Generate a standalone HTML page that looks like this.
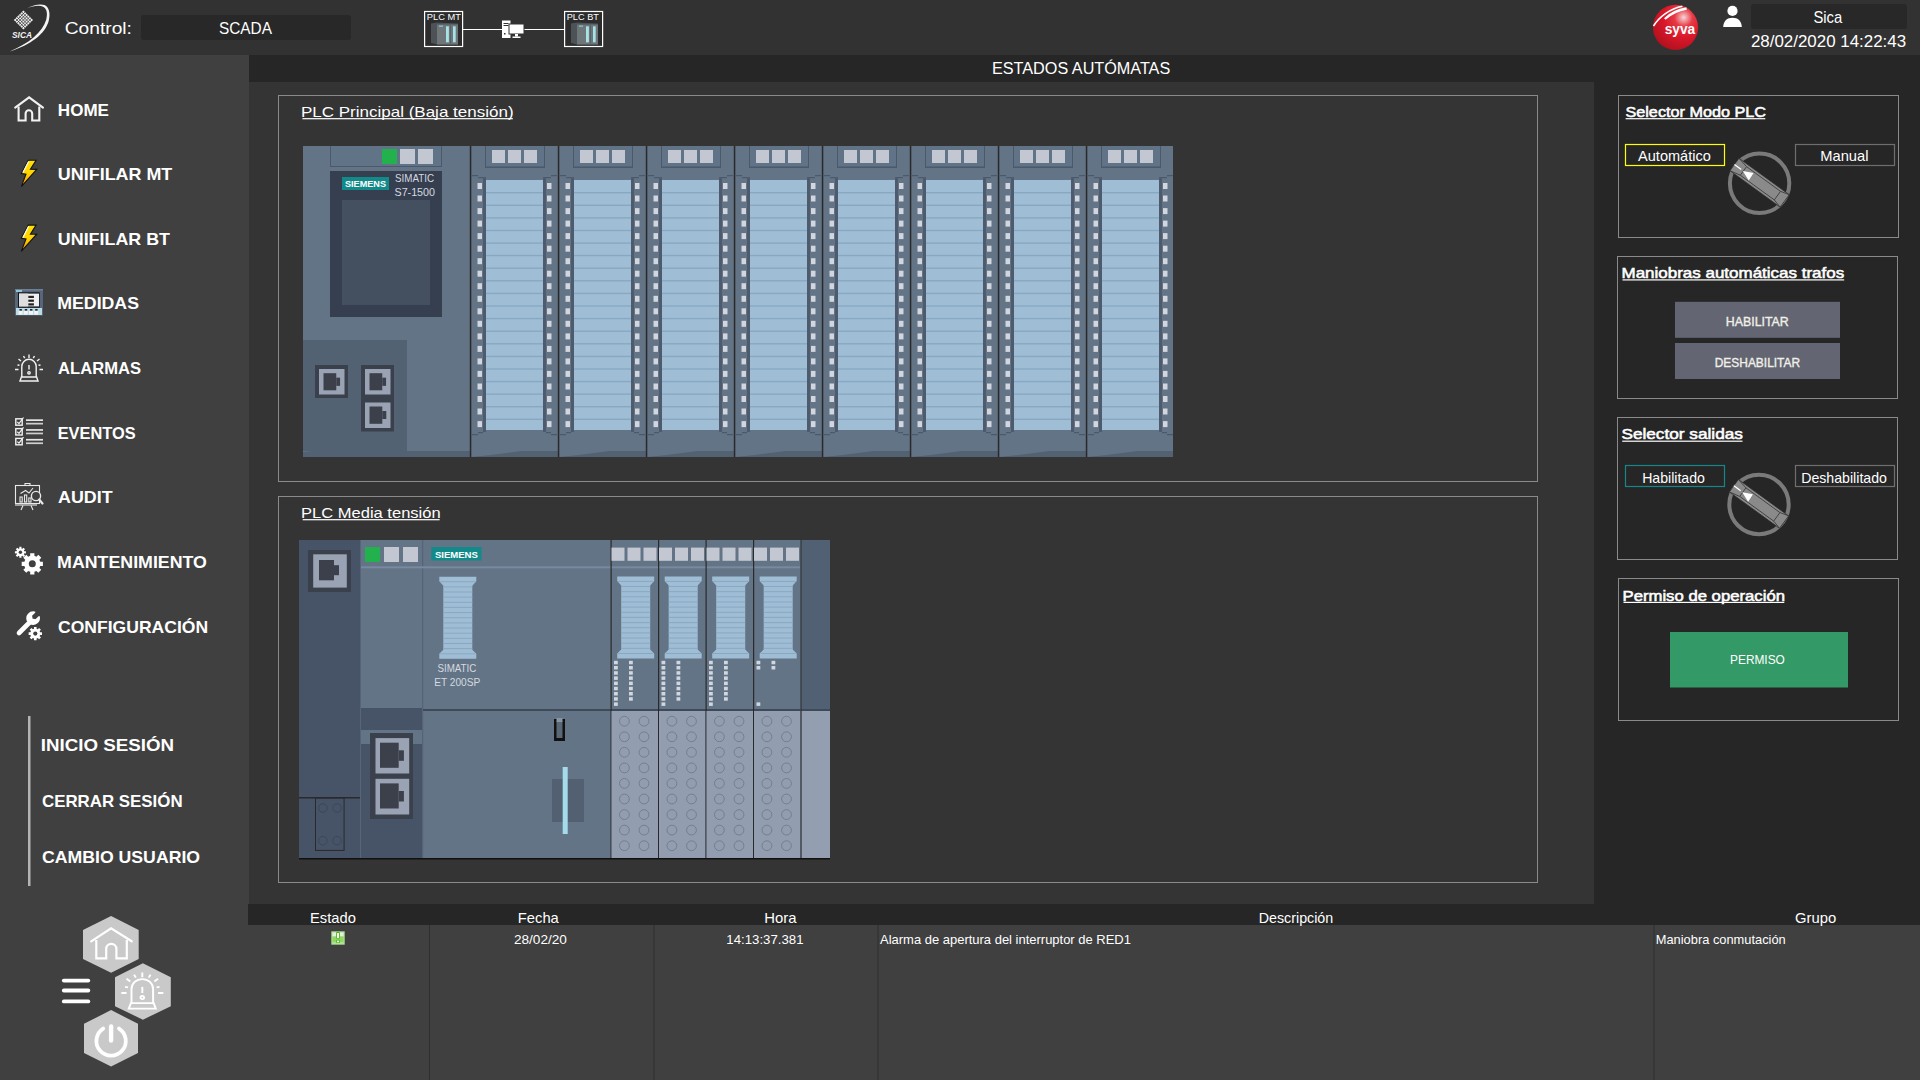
<!DOCTYPE html>
<html><head><meta charset="utf-8"><title>SCADA</title>
<style>
*{margin:0;padding:0}
html,body{width:1920px;height:1080px;overflow:hidden;background:#353535}
svg{display:block}
text{font-family:"Liberation Sans", sans-serif}
</style></head><body>
<svg width="1920" height="1080" viewBox="0 0 1920 1080" font-family="Liberation Sans, sans-serif">
<rect x="0" y="0" width="1920" height="55" fill="#323232" />
<rect x="0" y="55" width="249" height="1025" fill="#404040" />
<rect x="249" y="55" width="1671" height="27" fill="#262626" />
<rect x="249" y="82" width="1345" height="822" fill="#343434" />
<rect x="1594" y="82" width="326" height="822" fill="#262626" />
<rect x="248" y="904" width="1672" height="21" fill="#262626" />
<rect x="248" y="925" width="1672" height="155" fill="#404040" />
<rect x="429" y="925" width="1" height="155" fill="#2f2f2f" />
<rect x="653.5" y="925" width="1" height="155" fill="#2f2f2f" />
<rect x="877.5" y="925" width="1" height="155" fill="#2f2f2f" />
<rect x="1653.5" y="925" width="1" height="155" fill="#2f2f2f" />
<path d="M26.9 8.4 C 33 5, 40 3.4, 44.5 5 C 49.6 7.2, 50.3 14, 48.8 20.5 C 45.5 33.5, 31 45, 9.6 51.4 C 29 43.6, 42.6 32, 46.2 19.8 C 47.6 14.2, 47.2 9.2, 43.6 6.9 C 39.6 5.0, 33 5.8, 26.9 8.4 Z" fill="#f4f4f4"/>
<g transform="translate(23.4 20) rotate(45)">
<rect x="-6.8" y="-6.8" width="13.6" height="13.6" fill="#eee"/>
<g stroke="#323232" stroke-width="0.7"><line x1="-7" y1="-4.5" x2="7" y2="-4.5"/><line x1="-4.5" y1="-7" x2="-4.5" y2="7"/><line x1="-7" y1="-2.25" x2="7" y2="-2.25"/><line x1="-2.25" y1="-7" x2="-2.25" y2="7"/><line x1="-7" y1="0" x2="7" y2="0"/><line x1="0" y1="-7" x2="0" y2="7"/><line x1="-7" y1="2.25" x2="7" y2="2.25"/><line x1="2.25" y1="-7" x2="2.25" y2="7"/><line x1="-7" y1="4.5" x2="7" y2="4.5"/><line x1="4.5" y1="-7" x2="4.5" y2="7"/>
</g></g>
<text x="12" y="38" font-weight="bold" font-style="italic" font-size="9.6" fill="#f0f0f0" textLength="20" lengthAdjust="spacingAndGlyphs">SICA</text>
<rect x="141" y="15" width="210" height="25" rx="3" fill="#282828"/>
<rect x="424.6" y="11.5" width="38" height="35" fill="#2c2c2c" stroke="#fff" stroke-width="1.2"/>
<path d="M431 23.5 L437 22.5 L458 23.5 L458 44.5 L437 44.5 L431 43 Z" fill="#4c5256"/>
<rect x="437" y="24.5" width="21" height="20" fill="#6f767a"/>
<rect x="446" y="26.3" width="2.9" height="16" fill="#a6e2e6"/>
<rect x="453" y="26.3" width="2.7" height="16" fill="#a6e2e6"/>
<rect x="439" y="25.5" width="4" height="1.3" fill="#7fc6cc"/>
<rect x="450" y="24.5" width="1" height="20" fill="#5a6165"/>

<rect x="564.6" y="11.5" width="38" height="35" fill="#2c2c2c" stroke="#fff" stroke-width="1.2"/>
<path d="M571 23.5 L577 22.5 L598 23.5 L598 44.5 L577 44.5 L571 43 Z" fill="#4c5256"/>
<rect x="577" y="24.5" width="21" height="20" fill="#6f767a"/>
<rect x="586" y="26.3" width="2.9" height="16" fill="#a6e2e6"/>
<rect x="593" y="26.3" width="2.7" height="16" fill="#a6e2e6"/>
<rect x="579" y="25.5" width="4" height="1.3" fill="#7fc6cc"/>
<rect x="590" y="24.5" width="1" height="20" fill="#5a6165"/>

<line x1="463" y1="29.5" x2="502" y2="29.5" stroke="#fff" stroke-width="1"/>
<line x1="524" y1="29.5" x2="564" y2="29.5" stroke="#fff" stroke-width="1"/>
<rect x="502" y="20.5" width="8.5" height="17.5" fill="#fff"/>
<rect x="503.5" y="23" width="5" height="1" fill="#323232"/>
<rect x="503.5" y="25" width="5" height="1" fill="#323232"/>
<rect x="504" y="33" width="1.5" height="1.5" fill="#323232"/>
<rect x="509" y="24" width="15" height="10" fill="#fff" stroke="#323232" stroke-width="1"/>
<rect x="515" y="34" width="3" height="2.5" fill="#fff"/>
<rect x="512.5" y="36.5" width="8" height="1.5" fill="#fff"/>
<defs><radialGradient id="sg" cx="0.68" cy="0.28" r="0.8">
<stop offset="0" stop-color="#f9d5d8"/><stop offset="0.25" stop-color="#e63a45"/><stop offset="0.55" stop-color="#d9182a"/><stop offset="1" stop-color="#b0101e"/></radialGradient></defs>
<g transform="translate(1645 0)">
<circle cx="30.5" cy="27.4" r="22.6" fill="url(#sg)"/>
<path d="M8.5 26 C 14 17, 25 8.5, 37.4 6.2" stroke="#fff" stroke-width="1.6" fill="none"/>
<path d="M19.8 19 C 25 14, 33 10, 41.6 8.5" stroke="#fff" stroke-width="2.3" fill="none"/>
<text x="35" y="34.3" font-weight="bold" font-size="13.8" fill="#fff" text-anchor="middle" textLength="30.5" lengthAdjust="spacingAndGlyphs">syva</text>
</g>
<g transform="translate(1720 0)">
<circle cx="12.5" cy="10.9" r="5.1" fill="#fff"/>
<path d="M3.2 27 C 3.5 21, 7 17.8, 12.5 17.8 C 18 17.8, 21.5 21, 21.8 27 Z" fill="#fff"/>
</g>
<rect x="1751" y="4" width="156" height="25" rx="3" fill="#282828"/>
<defs><linearGradient id="boltg" x1="0" y1="0" x2="0" y2="1">
<stop offset="0" stop-color="#ffe000"/><stop offset="0.5" stop-color="#ffd400"/><stop offset="1" stop-color="#ff9000"/></linearGradient></defs>
<path d="M15.2 107.6 L29.1 97.4 L43 107.6" fill="none" stroke="#f2f2f2" stroke-width="2.1" stroke-linecap="round"/>
<path d="M18.6 106.5 L18.6 120.5 L25.6 120.5 L25.6 113.6 A3.3 3.3 0 0 1 32.2 113.6 L32.2 120.5 L39.3 120.5 L39.3 106.5" fill="none" stroke="#f2f2f2" stroke-width="2.1"/>
<g transform="translate(0 0)">
<path d="M28.3 160.2 L36.1 160.3 L30.4 169.3 L36.7 169.4 L21.3 186.6 L26 174.1 L21.3 173.5 Z" fill="url(#boltg)" stroke="#121212" stroke-width="1.1" stroke-linejoin="miter"/>
<path d="M28.6 161.4 L23 172.6" stroke="#ffffff" stroke-width="1.2"/>
</g>
<g transform="translate(0 64.8)">
<path d="M28.3 160.2 L36.1 160.3 L30.4 169.3 L36.7 169.4 L21.3 186.6 L26 174.1 L21.3 173.5 Z" fill="url(#boltg)" stroke="#121212" stroke-width="1.1" stroke-linejoin="miter"/>
<path d="M28.6 161.4 L23 172.6" stroke="#ffffff" stroke-width="1.2"/>
</g>
<rect x="15" y="289" width="28" height="26.6" fill="#56667c"/>
<rect x="15" y="289" width="28" height="1.5" fill="#6f8096"/>
<rect x="16" y="290" width="6" height="2" fill="#8fc6d0"/>
<rect x="18" y="292.3" width="21.7" height="15.4" fill="#111418"/>
<rect x="19" y="293.6" width="20" height="12.8" fill="#f0f0f0"/>
<rect x="19" y="293.6" width="9" height="12.8" fill="#dedede"/>
<g fill="#222"><rect x="28.3" y="295.8" width="5.6" height="2.2"/><rect x="28.3" y="299.6" width="5.6" height="2.2"/><rect x="28.3" y="303.3" width="5.6" height="2.2"/></g>
<rect x="16" y="308" width="26" height="7" fill="#bcdbe4"/>
<g fill="#f4f4f4"><rect x="18.5" y="311" width="4" height="3.6"/><rect x="23.8" y="311" width="4" height="3.6"/><rect x="29" y="311" width="4" height="3.6"/><rect x="34.2" y="311" width="4" height="3.6"/></g>
<g fill="#1c2430"><rect x="19.5" y="309" width="2.4" height="1.6"/><rect x="24.8" y="309" width="2.4" height="1.6"/><rect x="30" y="309" width="2.4" height="1.6"/><rect x="35.2" y="309" width="2.4" height="1.6"/></g>
<g transform="translate(29 364.5) scale(1.0)" fill="none" stroke="#f2f2f2" stroke-width="1.4">
<path d="M-7.2 12.5 L-7.2 2 A7.2 7.2 0 0 1 7.2 2 L7.2 12.5"/>
<path d="M-9 16.5 L-7.6 12.5 L7.6 12.5 L9 16.5 Z"/>
<path d="M0 0.5 L0 5"/><circle cx="0" cy="8.3" r="1.2"/>
<path d="M0 -10 L0 -6.5 M-5.5 -8.5 L-4.3 -6.3 M5.5 -8.5 L4.3 -6.3 M-10.5 -5.5 L-8 -3.5 M10.5 -5.5 L8 -3.5 M-11.5 0.5 L-9.5 0.8 M11.5 0.5 L9.5 0.8 M-14 5 L-10.5 5 M14 5 L10.5 5"/>
</g>
<rect x="15.8" y="418.8" width="6.4" height="6.4" fill="none" stroke="#f2f2f2" stroke-width="1.4"/><path d="M17.3 422 L19 423.6 L23.5 417.5" fill="none" stroke="#f2f2f2" stroke-width="1.2"/><rect x="26" y="419.3" width="17" height="1.7" fill="#e6e6e6"/><rect x="26" y="422.8" width="17" height="1.7" fill="#cfcfcf"/><rect x="15.8" y="428.6" width="6.4" height="6.4" fill="none" stroke="#f2f2f2" stroke-width="1.4"/><path d="M17.3 431.8 L19 433.40000000000003 L23.5 427.3" fill="none" stroke="#f2f2f2" stroke-width="1.2"/><rect x="26" y="429.1" width="17" height="1.7" fill="#e6e6e6"/><rect x="26" y="432.6" width="17" height="1.7" fill="#cfcfcf"/><rect x="15.8" y="438.40000000000003" width="6.4" height="6.4" fill="none" stroke="#f2f2f2" stroke-width="1.4"/><path d="M17.3 441.6 L19 443.20000000000005 L23.5 437.1" fill="none" stroke="#f2f2f2" stroke-width="1.2"/><rect x="26" y="438.90000000000003" width="17" height="1.7" fill="#e6e6e6"/><rect x="26" y="442.40000000000003" width="17" height="1.7" fill="#cfcfcf"/>
<g fill="none" stroke="#e8e8e8" stroke-width="1.1">
<rect x="15.5" y="485.5" width="24" height="18"/>
<path d="M25 485.5 L25 483.5 L30 483.5 L30 485.5"/>
<path d="M15 505 L37 505"/>
<path d="M23 505.5 L21 510 M31 505.5 L33 510"/>
<path d="M20.5 493.5 L25.5 490.5 L29 493 L33 488"/>
<rect x="20" y="497" width="2.2" height="5"/><rect x="24.5" y="495" width="2.2" height="7"/><rect x="28.8" y="498" width="2.2" height="4"/>
</g>
<circle cx="36" cy="496" r="4.6" fill="#404040" stroke="#e8e8e8" stroke-width="1.4"/>
<path d="M39.2 499.5 L42.5 503.5" stroke="#e8e8e8" stroke-width="2.2" stroke-linecap="round"/>
<path d="M24.27 551.27 L25.89 551.21 L25.89 553.39 L24.27 553.33 L23.86 554.31 L25.06 555.41 L23.51 556.96 L22.41 555.76 L21.43 556.17 L21.49 557.79 L19.31 557.79 L19.37 556.17 L18.39 555.76 L17.29 556.96 L15.74 555.41 L16.94 554.31 L16.53 553.33 L14.91 553.39 L14.91 551.21 L16.53 551.27 L16.94 550.29 L15.74 549.19 L17.29 547.64 L18.39 548.84 L19.37 548.43 L19.31 546.81 L21.49 546.81 L21.43 548.43 L22.41 548.84 L23.51 547.64 L25.06 549.19 L23.86 550.29 Z" fill="#fff"/><circle cx="20.4" cy="552.3" r="1.7" fill="#404040"/>
<path d="M40.23 561.70 L42.89 561.69 L42.89 565.91 L40.23 565.90 L39.39 567.92 L41.28 569.80 L38.30 572.78 L36.42 570.89 L34.40 571.73 L34.41 574.39 L30.19 574.39 L30.20 571.73 L28.18 570.89 L26.30 572.78 L23.32 569.80 L25.21 567.92 L24.37 565.90 L21.71 565.91 L21.71 561.69 L24.37 561.70 L25.21 559.68 L23.32 557.80 L26.30 554.82 L28.18 556.71 L30.20 555.87 L30.19 553.21 L34.41 553.21 L34.40 555.87 L36.42 556.71 L38.30 554.82 L41.28 557.80 L39.39 559.68 Z" fill="#fff"/><circle cx="32.3" cy="563.8" r="3.5" fill="#404040"/>
<path d="M19 633 L30 622" stroke="#fff" stroke-width="4.6" stroke-linecap="round"/>
<path d="M27.4 620.5 A6.3 6.3 0 0 1 34.6 612.2 L31.3 615.6 L32 619.3 L35.7 620.1 L39.1 616.8 A6.3 6.3 0 0 1 30.8 623.9 Z" fill="#fff" stroke="#fff" stroke-width="1.5" stroke-linejoin="round"/>
<path d="M40.13 632.32 L41.97 632.27 L41.97 634.93 L40.13 634.88 L39.62 636.11 L40.95 637.38 L39.08 639.25 L37.81 637.92 L36.58 638.43 L36.63 640.27 L33.97 640.27 L34.02 638.43 L32.79 637.92 L31.52 639.25 L29.65 637.38 L30.98 636.11 L30.47 634.88 L28.63 634.93 L28.63 632.27 L30.47 632.32 L30.98 631.09 L29.65 629.82 L31.52 627.95 L32.79 629.28 L34.02 628.77 L33.97 626.93 L36.63 626.93 L36.58 628.77 L37.81 629.28 L39.08 627.95 L40.95 629.82 L39.62 631.09 Z" fill="#fff"/><circle cx="35.3" cy="633.6" r="2.1" fill="#404040"/>
<rect x="28" y="716" width="2.5" height="170" fill="#b4b4b4"/>
<path d="M111.1 916.1 L138.7 929.9 L138.7 958.9 L111.1 972.7 L83 958.9 L83 929.9 Z" fill="#c9c9c9"/>
<path d="M142.9 963.2 L170.8 977.2 L170.8 1006.3 L142.9 1019.7 L115 1006.3 L115 977.2 Z" fill="#c9c9c9"/>
<path d="M111.1 1010.1 L138 1023.8 L138 1052.9 L111.1 1066.6 L84 1052.9 L84 1023.8 Z" fill="#c9c9c9"/>
<path d="M91.2 941.3 L111.1 928.3 L131.7 941.3" fill="none" stroke="#fff" stroke-width="2.2" stroke-linecap="round"/>
<path d="M96.3 940 L96.3 958.3 L106.2 958.3 L106.2 948.9 A5.1 5.1 0 0 1 116.4 948.9 L116.4 958.3 L126.8 958.3 L126.8 940" fill="none" stroke="#fff" stroke-width="2.2"/>
<g transform="translate(142.3 986.2) scale(1.5 1.36)"><g transform="translate(0 0) scale(1.0)" fill="none" stroke="#fff" stroke-width="1.3">
<path d="M-7.2 12.5 L-7.2 2 A7.2 7.2 0 0 1 7.2 2 L7.2 12.5"/>
<path d="M-9 16.5 L-7.6 12.5 L7.6 12.5 L9 16.5 Z"/>
<path d="M0 0.5 L0 5"/><circle cx="0" cy="8.3" r="1.2"/>
<path d="M0 -10 L0 -6.5 M-5.5 -8.5 L-4.3 -6.3 M5.5 -8.5 L4.3 -6.3 M-10.5 -5.5 L-8 -3.5 M10.5 -5.5 L8 -3.5 M-11.5 0.5 L-9.5 0.8 M11.5 0.5 L9.5 0.8 M-14 5 L-10.5 5 M14 5 L10.5 5"/>
</g></g>
<path d="M103.2 1028.6 A14.7 14.7 0 1 0 119 1028.6" fill="none" stroke="#fff" stroke-width="3.8" stroke-linecap="round"/>
<path d="M111.1 1026.5 L111.1 1040.5" stroke="#fff" stroke-width="4.4" stroke-linecap="round"/>
<path d="M63.8 980.6 L88.3 980.6" stroke="#fff" stroke-width="3.8" stroke-linecap="round"/>
<path d="M63.8 990.5 L88.3 990.5" stroke="#fff" stroke-width="3.8" stroke-linecap="round"/>
<path d="M63.8 1001.4 L88.3 1001.4" stroke="#fff" stroke-width="3.8" stroke-linecap="round"/>
<rect x="278.5" y="95.5" width="1259" height="386" fill="none" stroke="#8a8a8a" stroke-width="1"/>
<rect x="278.5" y="496.5" width="1259" height="386" fill="none" stroke="#8a8a8a" stroke-width="1"/>
<rect x="303" y="146" width="167" height="311" fill="#627485" />
<rect x="330" y="146" width="112" height="21" fill="#4b596b" />
<rect x="331" y="146" width="110" height="20" fill="#617386" />
<rect x="382" y="149" width="15" height="15" fill="#22b14c" />
<rect x="400" y="149" width="15" height="15" fill="#c2c7d2" />
<rect x="418" y="149" width="15" height="15" fill="#c2c7d2" />
<rect x="330" y="171" width="112" height="146" fill="#363f4f" />
<rect x="342" y="177" width="47" height="13" fill="#138a8a" />
<text x="365.5" y="187.3" font-family="Liberation Sans" font-weight="bold" font-size="9.3" fill="#fff" text-anchor="middle" textLength="41" lengthAdjust="spacingAndGlyphs">SIEMENS</text>
<text x="395" y="182" font-family="Liberation Sans" font-size="10.8" fill="#d5d9e0" textLength="39" lengthAdjust="spacingAndGlyphs">SIMATIC</text>
<text x="394.5" y="195.8" font-family="Liberation Sans" font-size="10.8" fill="#d5d9e0" textLength="40.5" lengthAdjust="spacingAndGlyphs">S7-1500</text>
<rect x="342" y="200" width="88" height="105" fill="#444f60" />
<rect x="303" y="340" width="104" height="111" fill="#536273" />
<rect x="315" y="365" width="33" height="33" fill="#3a404c" />
<rect x="319" y="369" width="25.5" height="25.5" fill="#9aa3b3" /><rect x="323.5" y="373.2" width="12.75" height="17.1" fill="#3c404b" /><rect x="336.25" y="377.646" width="3.8249999999999997" height="8.208" fill="#3c404b" />
<rect x="361" y="365" width="33" height="66.5" fill="#3a404c" />
<rect x="365" y="369" width="25.5" height="25.5" fill="#9aa3b3" /><rect x="369.5" y="373.2" width="12.75" height="17.1" fill="#3c404b" /><rect x="382.25" y="377.646" width="3.8249999999999997" height="8.208" fill="#3c404b" />
<rect x="365" y="402.5" width="25.5" height="25.5" fill="#9aa3b3" />
<rect x="369.5" y="406.5" width="12.8" height="17.3" fill="#3c404b" />
<rect x="382.3" y="411" width="4" height="8" fill="#3c404b" />
<path d="M303 452 L340 448 L355 445.5 L407 445.5 L407 451 L470 451 L470 457 L303 457 Z" fill="#536273"/>
<rect x="471" y="146" width="87" height="311" fill="#627485" />
<rect x="469.8" y="146" width="1.5" height="311" fill="#2a2a2c" />
<rect x="485" y="146" width="60" height="22" fill="#4b596b" />
<rect x="486" y="146" width="58" height="20.5" fill="#617386" />
<rect x="492" y="150" width="13" height="13" fill="#c2c7d2" />
<rect x="508" y="150" width="13" height="13" fill="#c2c7d2" />
<rect x="524" y="150" width="13" height="13" fill="#c2c7d2" />
<rect x="472" y="175" width="6" height="1.2" fill="#4b596b" />
<rect x="478" y="177" width="5" height="1.2" fill="#4b596b" />
<rect x="483" y="177" width="3" height="255" fill="#4d5b6d" />
<rect x="543" y="177" width="3" height="255" fill="#4d5b6d" />
<rect x="546" y="177" width="5" height="1.2" fill="#4b596b" />
<rect x="551" y="175" width="6" height="1.2" fill="#4b596b" />
<rect x="472" y="434" width="6" height="1.2" fill="#4b596b" />
<rect x="478" y="432" width="5" height="1.2" fill="#4b596b" />
<rect x="546" y="432" width="5" height="1.2" fill="#4b596b" />
<rect x="551" y="434" width="6" height="1.2" fill="#4b596b" />
<rect x="486" y="180" width="57" height="250" fill="#a0bdd6" />
<rect x="486" y="192.0" width="57" height="1.4" fill="#88a8c2" />
<rect x="486" y="204.6" width="57" height="1.4" fill="#88a8c2" />
<rect x="486" y="217.2" width="57" height="1.4" fill="#88a8c2" />
<rect x="486" y="229.8" width="57" height="1.4" fill="#88a8c2" />
<rect x="486" y="242.4" width="57" height="1.4" fill="#88a8c2" />
<rect x="486" y="254.9" width="57" height="1.4" fill="#88a8c2" />
<rect x="486" y="267.5" width="57" height="1.4" fill="#88a8c2" />
<rect x="486" y="280.1" width="57" height="1.4" fill="#88a8c2" />
<rect x="486" y="292.7" width="57" height="1.4" fill="#88a8c2" />
<rect x="486" y="305.3" width="57" height="1.4" fill="#88a8c2" />
<rect x="486" y="317.9" width="57" height="1.4" fill="#88a8c2" />
<rect x="486" y="330.5" width="57" height="1.4" fill="#88a8c2" />
<rect x="486" y="343.1" width="57" height="1.4" fill="#88a8c2" />
<rect x="486" y="355.7" width="57" height="1.4" fill="#88a8c2" />
<rect x="486" y="368.3" width="57" height="1.4" fill="#88a8c2" />
<rect x="486" y="380.9" width="57" height="1.4" fill="#88a8c2" />
<rect x="486" y="393.4" width="57" height="1.4" fill="#88a8c2" />
<rect x="486" y="406.0" width="57" height="1.4" fill="#88a8c2" />
<rect x="486" y="418.6" width="57" height="1.4" fill="#88a8c2" />
<rect x="477.5" y="183.0" width="4.5" height="6" fill="#d2d6de" />
<rect x="547" y="183.0" width="4.5" height="6" fill="#d2d6de" />
<rect x="477.5" y="195.5" width="4.5" height="6" fill="#d2d6de" />
<rect x="547" y="195.5" width="4.5" height="6" fill="#d2d6de" />
<rect x="477.5" y="208.1" width="4.5" height="6" fill="#d2d6de" />
<rect x="547" y="208.1" width="4.5" height="6" fill="#d2d6de" />
<rect x="477.5" y="220.6" width="4.5" height="6" fill="#d2d6de" />
<rect x="547" y="220.6" width="4.5" height="6" fill="#d2d6de" />
<rect x="477.5" y="233.1" width="4.5" height="6" fill="#d2d6de" />
<rect x="547" y="233.1" width="4.5" height="6" fill="#d2d6de" />
<rect x="477.5" y="245.7" width="4.5" height="6" fill="#d2d6de" />
<rect x="547" y="245.7" width="4.5" height="6" fill="#d2d6de" />
<rect x="477.5" y="258.2" width="4.5" height="6" fill="#d2d6de" />
<rect x="547" y="258.2" width="4.5" height="6" fill="#d2d6de" />
<rect x="477.5" y="270.7" width="4.5" height="6" fill="#d2d6de" />
<rect x="547" y="270.7" width="4.5" height="6" fill="#d2d6de" />
<rect x="477.5" y="283.2" width="4.5" height="6" fill="#d2d6de" />
<rect x="547" y="283.2" width="4.5" height="6" fill="#d2d6de" />
<rect x="477.5" y="295.8" width="4.5" height="6" fill="#d2d6de" />
<rect x="547" y="295.8" width="4.5" height="6" fill="#d2d6de" />
<rect x="477.5" y="308.3" width="4.5" height="6" fill="#d2d6de" />
<rect x="547" y="308.3" width="4.5" height="6" fill="#d2d6de" />
<rect x="477.5" y="320.8" width="4.5" height="6" fill="#d2d6de" />
<rect x="547" y="320.8" width="4.5" height="6" fill="#d2d6de" />
<rect x="477.5" y="333.4" width="4.5" height="6" fill="#d2d6de" />
<rect x="547" y="333.4" width="4.5" height="6" fill="#d2d6de" />
<rect x="477.5" y="345.9" width="4.5" height="6" fill="#d2d6de" />
<rect x="547" y="345.9" width="4.5" height="6" fill="#d2d6de" />
<rect x="477.5" y="358.4" width="4.5" height="6" fill="#d2d6de" />
<rect x="547" y="358.4" width="4.5" height="6" fill="#d2d6de" />
<rect x="477.5" y="370.9" width="4.5" height="6" fill="#d2d6de" />
<rect x="547" y="370.9" width="4.5" height="6" fill="#d2d6de" />
<rect x="477.5" y="383.5" width="4.5" height="6" fill="#d2d6de" />
<rect x="547" y="383.5" width="4.5" height="6" fill="#d2d6de" />
<rect x="477.5" y="396.0" width="4.5" height="6" fill="#d2d6de" />
<rect x="547" y="396.0" width="4.5" height="6" fill="#d2d6de" />
<rect x="477.5" y="408.5" width="4.5" height="6" fill="#d2d6de" />
<rect x="547" y="408.5" width="4.5" height="6" fill="#d2d6de" />
<rect x="477.5" y="421.1" width="4.5" height="6" fill="#d2d6de" />
<rect x="547" y="421.1" width="4.5" height="6" fill="#d2d6de" />
<path d="M471 457 L491 455 L521 451 L558 451 L558 457 Z" fill="#536273"/>
<rect x="559" y="146" width="87" height="311" fill="#627485" />
<rect x="557.8" y="146" width="1.5" height="311" fill="#2a2a2c" />
<rect x="573" y="146" width="60" height="22" fill="#4b596b" />
<rect x="574" y="146" width="58" height="20.5" fill="#617386" />
<rect x="580" y="150" width="13" height="13" fill="#c2c7d2" />
<rect x="596" y="150" width="13" height="13" fill="#c2c7d2" />
<rect x="612" y="150" width="13" height="13" fill="#c2c7d2" />
<rect x="560" y="175" width="6" height="1.2" fill="#4b596b" />
<rect x="566" y="177" width="5" height="1.2" fill="#4b596b" />
<rect x="571" y="177" width="3" height="255" fill="#4d5b6d" />
<rect x="631" y="177" width="3" height="255" fill="#4d5b6d" />
<rect x="634" y="177" width="5" height="1.2" fill="#4b596b" />
<rect x="639" y="175" width="6" height="1.2" fill="#4b596b" />
<rect x="560" y="434" width="6" height="1.2" fill="#4b596b" />
<rect x="566" y="432" width="5" height="1.2" fill="#4b596b" />
<rect x="634" y="432" width="5" height="1.2" fill="#4b596b" />
<rect x="639" y="434" width="6" height="1.2" fill="#4b596b" />
<rect x="574" y="180" width="57" height="250" fill="#a0bdd6" />
<rect x="574" y="192.0" width="57" height="1.4" fill="#88a8c2" />
<rect x="574" y="204.6" width="57" height="1.4" fill="#88a8c2" />
<rect x="574" y="217.2" width="57" height="1.4" fill="#88a8c2" />
<rect x="574" y="229.8" width="57" height="1.4" fill="#88a8c2" />
<rect x="574" y="242.4" width="57" height="1.4" fill="#88a8c2" />
<rect x="574" y="254.9" width="57" height="1.4" fill="#88a8c2" />
<rect x="574" y="267.5" width="57" height="1.4" fill="#88a8c2" />
<rect x="574" y="280.1" width="57" height="1.4" fill="#88a8c2" />
<rect x="574" y="292.7" width="57" height="1.4" fill="#88a8c2" />
<rect x="574" y="305.3" width="57" height="1.4" fill="#88a8c2" />
<rect x="574" y="317.9" width="57" height="1.4" fill="#88a8c2" />
<rect x="574" y="330.5" width="57" height="1.4" fill="#88a8c2" />
<rect x="574" y="343.1" width="57" height="1.4" fill="#88a8c2" />
<rect x="574" y="355.7" width="57" height="1.4" fill="#88a8c2" />
<rect x="574" y="368.3" width="57" height="1.4" fill="#88a8c2" />
<rect x="574" y="380.9" width="57" height="1.4" fill="#88a8c2" />
<rect x="574" y="393.4" width="57" height="1.4" fill="#88a8c2" />
<rect x="574" y="406.0" width="57" height="1.4" fill="#88a8c2" />
<rect x="574" y="418.6" width="57" height="1.4" fill="#88a8c2" />
<rect x="565.5" y="183.0" width="4.5" height="6" fill="#d2d6de" />
<rect x="635" y="183.0" width="4.5" height="6" fill="#d2d6de" />
<rect x="565.5" y="195.5" width="4.5" height="6" fill="#d2d6de" />
<rect x="635" y="195.5" width="4.5" height="6" fill="#d2d6de" />
<rect x="565.5" y="208.1" width="4.5" height="6" fill="#d2d6de" />
<rect x="635" y="208.1" width="4.5" height="6" fill="#d2d6de" />
<rect x="565.5" y="220.6" width="4.5" height="6" fill="#d2d6de" />
<rect x="635" y="220.6" width="4.5" height="6" fill="#d2d6de" />
<rect x="565.5" y="233.1" width="4.5" height="6" fill="#d2d6de" />
<rect x="635" y="233.1" width="4.5" height="6" fill="#d2d6de" />
<rect x="565.5" y="245.7" width="4.5" height="6" fill="#d2d6de" />
<rect x="635" y="245.7" width="4.5" height="6" fill="#d2d6de" />
<rect x="565.5" y="258.2" width="4.5" height="6" fill="#d2d6de" />
<rect x="635" y="258.2" width="4.5" height="6" fill="#d2d6de" />
<rect x="565.5" y="270.7" width="4.5" height="6" fill="#d2d6de" />
<rect x="635" y="270.7" width="4.5" height="6" fill="#d2d6de" />
<rect x="565.5" y="283.2" width="4.5" height="6" fill="#d2d6de" />
<rect x="635" y="283.2" width="4.5" height="6" fill="#d2d6de" />
<rect x="565.5" y="295.8" width="4.5" height="6" fill="#d2d6de" />
<rect x="635" y="295.8" width="4.5" height="6" fill="#d2d6de" />
<rect x="565.5" y="308.3" width="4.5" height="6" fill="#d2d6de" />
<rect x="635" y="308.3" width="4.5" height="6" fill="#d2d6de" />
<rect x="565.5" y="320.8" width="4.5" height="6" fill="#d2d6de" />
<rect x="635" y="320.8" width="4.5" height="6" fill="#d2d6de" />
<rect x="565.5" y="333.4" width="4.5" height="6" fill="#d2d6de" />
<rect x="635" y="333.4" width="4.5" height="6" fill="#d2d6de" />
<rect x="565.5" y="345.9" width="4.5" height="6" fill="#d2d6de" />
<rect x="635" y="345.9" width="4.5" height="6" fill="#d2d6de" />
<rect x="565.5" y="358.4" width="4.5" height="6" fill="#d2d6de" />
<rect x="635" y="358.4" width="4.5" height="6" fill="#d2d6de" />
<rect x="565.5" y="370.9" width="4.5" height="6" fill="#d2d6de" />
<rect x="635" y="370.9" width="4.5" height="6" fill="#d2d6de" />
<rect x="565.5" y="383.5" width="4.5" height="6" fill="#d2d6de" />
<rect x="635" y="383.5" width="4.5" height="6" fill="#d2d6de" />
<rect x="565.5" y="396.0" width="4.5" height="6" fill="#d2d6de" />
<rect x="635" y="396.0" width="4.5" height="6" fill="#d2d6de" />
<rect x="565.5" y="408.5" width="4.5" height="6" fill="#d2d6de" />
<rect x="635" y="408.5" width="4.5" height="6" fill="#d2d6de" />
<rect x="565.5" y="421.1" width="4.5" height="6" fill="#d2d6de" />
<rect x="635" y="421.1" width="4.5" height="6" fill="#d2d6de" />
<path d="M559 457 L579 455 L609 451 L646 451 L646 457 Z" fill="#536273"/>
<rect x="647" y="146" width="87" height="311" fill="#627485" />
<rect x="645.8" y="146" width="1.5" height="311" fill="#2a2a2c" />
<rect x="661" y="146" width="60" height="22" fill="#4b596b" />
<rect x="662" y="146" width="58" height="20.5" fill="#617386" />
<rect x="668" y="150" width="13" height="13" fill="#c2c7d2" />
<rect x="684" y="150" width="13" height="13" fill="#c2c7d2" />
<rect x="700" y="150" width="13" height="13" fill="#c2c7d2" />
<rect x="648" y="175" width="6" height="1.2" fill="#4b596b" />
<rect x="654" y="177" width="5" height="1.2" fill="#4b596b" />
<rect x="659" y="177" width="3" height="255" fill="#4d5b6d" />
<rect x="719" y="177" width="3" height="255" fill="#4d5b6d" />
<rect x="722" y="177" width="5" height="1.2" fill="#4b596b" />
<rect x="727" y="175" width="6" height="1.2" fill="#4b596b" />
<rect x="648" y="434" width="6" height="1.2" fill="#4b596b" />
<rect x="654" y="432" width="5" height="1.2" fill="#4b596b" />
<rect x="722" y="432" width="5" height="1.2" fill="#4b596b" />
<rect x="727" y="434" width="6" height="1.2" fill="#4b596b" />
<rect x="662" y="180" width="57" height="250" fill="#a0bdd6" />
<rect x="662" y="192.0" width="57" height="1.4" fill="#88a8c2" />
<rect x="662" y="204.6" width="57" height="1.4" fill="#88a8c2" />
<rect x="662" y="217.2" width="57" height="1.4" fill="#88a8c2" />
<rect x="662" y="229.8" width="57" height="1.4" fill="#88a8c2" />
<rect x="662" y="242.4" width="57" height="1.4" fill="#88a8c2" />
<rect x="662" y="254.9" width="57" height="1.4" fill="#88a8c2" />
<rect x="662" y="267.5" width="57" height="1.4" fill="#88a8c2" />
<rect x="662" y="280.1" width="57" height="1.4" fill="#88a8c2" />
<rect x="662" y="292.7" width="57" height="1.4" fill="#88a8c2" />
<rect x="662" y="305.3" width="57" height="1.4" fill="#88a8c2" />
<rect x="662" y="317.9" width="57" height="1.4" fill="#88a8c2" />
<rect x="662" y="330.5" width="57" height="1.4" fill="#88a8c2" />
<rect x="662" y="343.1" width="57" height="1.4" fill="#88a8c2" />
<rect x="662" y="355.7" width="57" height="1.4" fill="#88a8c2" />
<rect x="662" y="368.3" width="57" height="1.4" fill="#88a8c2" />
<rect x="662" y="380.9" width="57" height="1.4" fill="#88a8c2" />
<rect x="662" y="393.4" width="57" height="1.4" fill="#88a8c2" />
<rect x="662" y="406.0" width="57" height="1.4" fill="#88a8c2" />
<rect x="662" y="418.6" width="57" height="1.4" fill="#88a8c2" />
<rect x="653.5" y="183.0" width="4.5" height="6" fill="#d2d6de" />
<rect x="723" y="183.0" width="4.5" height="6" fill="#d2d6de" />
<rect x="653.5" y="195.5" width="4.5" height="6" fill="#d2d6de" />
<rect x="723" y="195.5" width="4.5" height="6" fill="#d2d6de" />
<rect x="653.5" y="208.1" width="4.5" height="6" fill="#d2d6de" />
<rect x="723" y="208.1" width="4.5" height="6" fill="#d2d6de" />
<rect x="653.5" y="220.6" width="4.5" height="6" fill="#d2d6de" />
<rect x="723" y="220.6" width="4.5" height="6" fill="#d2d6de" />
<rect x="653.5" y="233.1" width="4.5" height="6" fill="#d2d6de" />
<rect x="723" y="233.1" width="4.5" height="6" fill="#d2d6de" />
<rect x="653.5" y="245.7" width="4.5" height="6" fill="#d2d6de" />
<rect x="723" y="245.7" width="4.5" height="6" fill="#d2d6de" />
<rect x="653.5" y="258.2" width="4.5" height="6" fill="#d2d6de" />
<rect x="723" y="258.2" width="4.5" height="6" fill="#d2d6de" />
<rect x="653.5" y="270.7" width="4.5" height="6" fill="#d2d6de" />
<rect x="723" y="270.7" width="4.5" height="6" fill="#d2d6de" />
<rect x="653.5" y="283.2" width="4.5" height="6" fill="#d2d6de" />
<rect x="723" y="283.2" width="4.5" height="6" fill="#d2d6de" />
<rect x="653.5" y="295.8" width="4.5" height="6" fill="#d2d6de" />
<rect x="723" y="295.8" width="4.5" height="6" fill="#d2d6de" />
<rect x="653.5" y="308.3" width="4.5" height="6" fill="#d2d6de" />
<rect x="723" y="308.3" width="4.5" height="6" fill="#d2d6de" />
<rect x="653.5" y="320.8" width="4.5" height="6" fill="#d2d6de" />
<rect x="723" y="320.8" width="4.5" height="6" fill="#d2d6de" />
<rect x="653.5" y="333.4" width="4.5" height="6" fill="#d2d6de" />
<rect x="723" y="333.4" width="4.5" height="6" fill="#d2d6de" />
<rect x="653.5" y="345.9" width="4.5" height="6" fill="#d2d6de" />
<rect x="723" y="345.9" width="4.5" height="6" fill="#d2d6de" />
<rect x="653.5" y="358.4" width="4.5" height="6" fill="#d2d6de" />
<rect x="723" y="358.4" width="4.5" height="6" fill="#d2d6de" />
<rect x="653.5" y="370.9" width="4.5" height="6" fill="#d2d6de" />
<rect x="723" y="370.9" width="4.5" height="6" fill="#d2d6de" />
<rect x="653.5" y="383.5" width="4.5" height="6" fill="#d2d6de" />
<rect x="723" y="383.5" width="4.5" height="6" fill="#d2d6de" />
<rect x="653.5" y="396.0" width="4.5" height="6" fill="#d2d6de" />
<rect x="723" y="396.0" width="4.5" height="6" fill="#d2d6de" />
<rect x="653.5" y="408.5" width="4.5" height="6" fill="#d2d6de" />
<rect x="723" y="408.5" width="4.5" height="6" fill="#d2d6de" />
<rect x="653.5" y="421.1" width="4.5" height="6" fill="#d2d6de" />
<rect x="723" y="421.1" width="4.5" height="6" fill="#d2d6de" />
<path d="M647 457 L667 455 L697 451 L734 451 L734 457 Z" fill="#536273"/>
<rect x="735" y="146" width="87" height="311" fill="#627485" />
<rect x="733.8" y="146" width="1.5" height="311" fill="#2a2a2c" />
<rect x="749" y="146" width="60" height="22" fill="#4b596b" />
<rect x="750" y="146" width="58" height="20.5" fill="#617386" />
<rect x="756" y="150" width="13" height="13" fill="#c2c7d2" />
<rect x="772" y="150" width="13" height="13" fill="#c2c7d2" />
<rect x="788" y="150" width="13" height="13" fill="#c2c7d2" />
<rect x="736" y="175" width="6" height="1.2" fill="#4b596b" />
<rect x="742" y="177" width="5" height="1.2" fill="#4b596b" />
<rect x="747" y="177" width="3" height="255" fill="#4d5b6d" />
<rect x="807" y="177" width="3" height="255" fill="#4d5b6d" />
<rect x="810" y="177" width="5" height="1.2" fill="#4b596b" />
<rect x="815" y="175" width="6" height="1.2" fill="#4b596b" />
<rect x="736" y="434" width="6" height="1.2" fill="#4b596b" />
<rect x="742" y="432" width="5" height="1.2" fill="#4b596b" />
<rect x="810" y="432" width="5" height="1.2" fill="#4b596b" />
<rect x="815" y="434" width="6" height="1.2" fill="#4b596b" />
<rect x="750" y="180" width="57" height="250" fill="#a0bdd6" />
<rect x="750" y="192.0" width="57" height="1.4" fill="#88a8c2" />
<rect x="750" y="204.6" width="57" height="1.4" fill="#88a8c2" />
<rect x="750" y="217.2" width="57" height="1.4" fill="#88a8c2" />
<rect x="750" y="229.8" width="57" height="1.4" fill="#88a8c2" />
<rect x="750" y="242.4" width="57" height="1.4" fill="#88a8c2" />
<rect x="750" y="254.9" width="57" height="1.4" fill="#88a8c2" />
<rect x="750" y="267.5" width="57" height="1.4" fill="#88a8c2" />
<rect x="750" y="280.1" width="57" height="1.4" fill="#88a8c2" />
<rect x="750" y="292.7" width="57" height="1.4" fill="#88a8c2" />
<rect x="750" y="305.3" width="57" height="1.4" fill="#88a8c2" />
<rect x="750" y="317.9" width="57" height="1.4" fill="#88a8c2" />
<rect x="750" y="330.5" width="57" height="1.4" fill="#88a8c2" />
<rect x="750" y="343.1" width="57" height="1.4" fill="#88a8c2" />
<rect x="750" y="355.7" width="57" height="1.4" fill="#88a8c2" />
<rect x="750" y="368.3" width="57" height="1.4" fill="#88a8c2" />
<rect x="750" y="380.9" width="57" height="1.4" fill="#88a8c2" />
<rect x="750" y="393.4" width="57" height="1.4" fill="#88a8c2" />
<rect x="750" y="406.0" width="57" height="1.4" fill="#88a8c2" />
<rect x="750" y="418.6" width="57" height="1.4" fill="#88a8c2" />
<rect x="741.5" y="183.0" width="4.5" height="6" fill="#d2d6de" />
<rect x="811" y="183.0" width="4.5" height="6" fill="#d2d6de" />
<rect x="741.5" y="195.5" width="4.5" height="6" fill="#d2d6de" />
<rect x="811" y="195.5" width="4.5" height="6" fill="#d2d6de" />
<rect x="741.5" y="208.1" width="4.5" height="6" fill="#d2d6de" />
<rect x="811" y="208.1" width="4.5" height="6" fill="#d2d6de" />
<rect x="741.5" y="220.6" width="4.5" height="6" fill="#d2d6de" />
<rect x="811" y="220.6" width="4.5" height="6" fill="#d2d6de" />
<rect x="741.5" y="233.1" width="4.5" height="6" fill="#d2d6de" />
<rect x="811" y="233.1" width="4.5" height="6" fill="#d2d6de" />
<rect x="741.5" y="245.7" width="4.5" height="6" fill="#d2d6de" />
<rect x="811" y="245.7" width="4.5" height="6" fill="#d2d6de" />
<rect x="741.5" y="258.2" width="4.5" height="6" fill="#d2d6de" />
<rect x="811" y="258.2" width="4.5" height="6" fill="#d2d6de" />
<rect x="741.5" y="270.7" width="4.5" height="6" fill="#d2d6de" />
<rect x="811" y="270.7" width="4.5" height="6" fill="#d2d6de" />
<rect x="741.5" y="283.2" width="4.5" height="6" fill="#d2d6de" />
<rect x="811" y="283.2" width="4.5" height="6" fill="#d2d6de" />
<rect x="741.5" y="295.8" width="4.5" height="6" fill="#d2d6de" />
<rect x="811" y="295.8" width="4.5" height="6" fill="#d2d6de" />
<rect x="741.5" y="308.3" width="4.5" height="6" fill="#d2d6de" />
<rect x="811" y="308.3" width="4.5" height="6" fill="#d2d6de" />
<rect x="741.5" y="320.8" width="4.5" height="6" fill="#d2d6de" />
<rect x="811" y="320.8" width="4.5" height="6" fill="#d2d6de" />
<rect x="741.5" y="333.4" width="4.5" height="6" fill="#d2d6de" />
<rect x="811" y="333.4" width="4.5" height="6" fill="#d2d6de" />
<rect x="741.5" y="345.9" width="4.5" height="6" fill="#d2d6de" />
<rect x="811" y="345.9" width="4.5" height="6" fill="#d2d6de" />
<rect x="741.5" y="358.4" width="4.5" height="6" fill="#d2d6de" />
<rect x="811" y="358.4" width="4.5" height="6" fill="#d2d6de" />
<rect x="741.5" y="370.9" width="4.5" height="6" fill="#d2d6de" />
<rect x="811" y="370.9" width="4.5" height="6" fill="#d2d6de" />
<rect x="741.5" y="383.5" width="4.5" height="6" fill="#d2d6de" />
<rect x="811" y="383.5" width="4.5" height="6" fill="#d2d6de" />
<rect x="741.5" y="396.0" width="4.5" height="6" fill="#d2d6de" />
<rect x="811" y="396.0" width="4.5" height="6" fill="#d2d6de" />
<rect x="741.5" y="408.5" width="4.5" height="6" fill="#d2d6de" />
<rect x="811" y="408.5" width="4.5" height="6" fill="#d2d6de" />
<rect x="741.5" y="421.1" width="4.5" height="6" fill="#d2d6de" />
<rect x="811" y="421.1" width="4.5" height="6" fill="#d2d6de" />
<path d="M735 457 L755 455 L785 451 L822 451 L822 457 Z" fill="#536273"/>
<rect x="823" y="146" width="87" height="311" fill="#627485" />
<rect x="821.8" y="146" width="1.5" height="311" fill="#2a2a2c" />
<rect x="837" y="146" width="60" height="22" fill="#4b596b" />
<rect x="838" y="146" width="58" height="20.5" fill="#617386" />
<rect x="844" y="150" width="13" height="13" fill="#c2c7d2" />
<rect x="860" y="150" width="13" height="13" fill="#c2c7d2" />
<rect x="876" y="150" width="13" height="13" fill="#c2c7d2" />
<rect x="824" y="175" width="6" height="1.2" fill="#4b596b" />
<rect x="830" y="177" width="5" height="1.2" fill="#4b596b" />
<rect x="835" y="177" width="3" height="255" fill="#4d5b6d" />
<rect x="895" y="177" width="3" height="255" fill="#4d5b6d" />
<rect x="898" y="177" width="5" height="1.2" fill="#4b596b" />
<rect x="903" y="175" width="6" height="1.2" fill="#4b596b" />
<rect x="824" y="434" width="6" height="1.2" fill="#4b596b" />
<rect x="830" y="432" width="5" height="1.2" fill="#4b596b" />
<rect x="898" y="432" width="5" height="1.2" fill="#4b596b" />
<rect x="903" y="434" width="6" height="1.2" fill="#4b596b" />
<rect x="838" y="180" width="57" height="250" fill="#a0bdd6" />
<rect x="838" y="192.0" width="57" height="1.4" fill="#88a8c2" />
<rect x="838" y="204.6" width="57" height="1.4" fill="#88a8c2" />
<rect x="838" y="217.2" width="57" height="1.4" fill="#88a8c2" />
<rect x="838" y="229.8" width="57" height="1.4" fill="#88a8c2" />
<rect x="838" y="242.4" width="57" height="1.4" fill="#88a8c2" />
<rect x="838" y="254.9" width="57" height="1.4" fill="#88a8c2" />
<rect x="838" y="267.5" width="57" height="1.4" fill="#88a8c2" />
<rect x="838" y="280.1" width="57" height="1.4" fill="#88a8c2" />
<rect x="838" y="292.7" width="57" height="1.4" fill="#88a8c2" />
<rect x="838" y="305.3" width="57" height="1.4" fill="#88a8c2" />
<rect x="838" y="317.9" width="57" height="1.4" fill="#88a8c2" />
<rect x="838" y="330.5" width="57" height="1.4" fill="#88a8c2" />
<rect x="838" y="343.1" width="57" height="1.4" fill="#88a8c2" />
<rect x="838" y="355.7" width="57" height="1.4" fill="#88a8c2" />
<rect x="838" y="368.3" width="57" height="1.4" fill="#88a8c2" />
<rect x="838" y="380.9" width="57" height="1.4" fill="#88a8c2" />
<rect x="838" y="393.4" width="57" height="1.4" fill="#88a8c2" />
<rect x="838" y="406.0" width="57" height="1.4" fill="#88a8c2" />
<rect x="838" y="418.6" width="57" height="1.4" fill="#88a8c2" />
<rect x="829.5" y="183.0" width="4.5" height="6" fill="#d2d6de" />
<rect x="899" y="183.0" width="4.5" height="6" fill="#d2d6de" />
<rect x="829.5" y="195.5" width="4.5" height="6" fill="#d2d6de" />
<rect x="899" y="195.5" width="4.5" height="6" fill="#d2d6de" />
<rect x="829.5" y="208.1" width="4.5" height="6" fill="#d2d6de" />
<rect x="899" y="208.1" width="4.5" height="6" fill="#d2d6de" />
<rect x="829.5" y="220.6" width="4.5" height="6" fill="#d2d6de" />
<rect x="899" y="220.6" width="4.5" height="6" fill="#d2d6de" />
<rect x="829.5" y="233.1" width="4.5" height="6" fill="#d2d6de" />
<rect x="899" y="233.1" width="4.5" height="6" fill="#d2d6de" />
<rect x="829.5" y="245.7" width="4.5" height="6" fill="#d2d6de" />
<rect x="899" y="245.7" width="4.5" height="6" fill="#d2d6de" />
<rect x="829.5" y="258.2" width="4.5" height="6" fill="#d2d6de" />
<rect x="899" y="258.2" width="4.5" height="6" fill="#d2d6de" />
<rect x="829.5" y="270.7" width="4.5" height="6" fill="#d2d6de" />
<rect x="899" y="270.7" width="4.5" height="6" fill="#d2d6de" />
<rect x="829.5" y="283.2" width="4.5" height="6" fill="#d2d6de" />
<rect x="899" y="283.2" width="4.5" height="6" fill="#d2d6de" />
<rect x="829.5" y="295.8" width="4.5" height="6" fill="#d2d6de" />
<rect x="899" y="295.8" width="4.5" height="6" fill="#d2d6de" />
<rect x="829.5" y="308.3" width="4.5" height="6" fill="#d2d6de" />
<rect x="899" y="308.3" width="4.5" height="6" fill="#d2d6de" />
<rect x="829.5" y="320.8" width="4.5" height="6" fill="#d2d6de" />
<rect x="899" y="320.8" width="4.5" height="6" fill="#d2d6de" />
<rect x="829.5" y="333.4" width="4.5" height="6" fill="#d2d6de" />
<rect x="899" y="333.4" width="4.5" height="6" fill="#d2d6de" />
<rect x="829.5" y="345.9" width="4.5" height="6" fill="#d2d6de" />
<rect x="899" y="345.9" width="4.5" height="6" fill="#d2d6de" />
<rect x="829.5" y="358.4" width="4.5" height="6" fill="#d2d6de" />
<rect x="899" y="358.4" width="4.5" height="6" fill="#d2d6de" />
<rect x="829.5" y="370.9" width="4.5" height="6" fill="#d2d6de" />
<rect x="899" y="370.9" width="4.5" height="6" fill="#d2d6de" />
<rect x="829.5" y="383.5" width="4.5" height="6" fill="#d2d6de" />
<rect x="899" y="383.5" width="4.5" height="6" fill="#d2d6de" />
<rect x="829.5" y="396.0" width="4.5" height="6" fill="#d2d6de" />
<rect x="899" y="396.0" width="4.5" height="6" fill="#d2d6de" />
<rect x="829.5" y="408.5" width="4.5" height="6" fill="#d2d6de" />
<rect x="899" y="408.5" width="4.5" height="6" fill="#d2d6de" />
<rect x="829.5" y="421.1" width="4.5" height="6" fill="#d2d6de" />
<rect x="899" y="421.1" width="4.5" height="6" fill="#d2d6de" />
<path d="M823 457 L843 455 L873 451 L910 451 L910 457 Z" fill="#536273"/>
<rect x="911" y="146" width="87" height="311" fill="#627485" />
<rect x="909.8" y="146" width="1.5" height="311" fill="#2a2a2c" />
<rect x="925" y="146" width="60" height="22" fill="#4b596b" />
<rect x="926" y="146" width="58" height="20.5" fill="#617386" />
<rect x="932" y="150" width="13" height="13" fill="#c2c7d2" />
<rect x="948" y="150" width="13" height="13" fill="#c2c7d2" />
<rect x="964" y="150" width="13" height="13" fill="#c2c7d2" />
<rect x="912" y="175" width="6" height="1.2" fill="#4b596b" />
<rect x="918" y="177" width="5" height="1.2" fill="#4b596b" />
<rect x="923" y="177" width="3" height="255" fill="#4d5b6d" />
<rect x="983" y="177" width="3" height="255" fill="#4d5b6d" />
<rect x="986" y="177" width="5" height="1.2" fill="#4b596b" />
<rect x="991" y="175" width="6" height="1.2" fill="#4b596b" />
<rect x="912" y="434" width="6" height="1.2" fill="#4b596b" />
<rect x="918" y="432" width="5" height="1.2" fill="#4b596b" />
<rect x="986" y="432" width="5" height="1.2" fill="#4b596b" />
<rect x="991" y="434" width="6" height="1.2" fill="#4b596b" />
<rect x="926" y="180" width="57" height="250" fill="#a0bdd6" />
<rect x="926" y="192.0" width="57" height="1.4" fill="#88a8c2" />
<rect x="926" y="204.6" width="57" height="1.4" fill="#88a8c2" />
<rect x="926" y="217.2" width="57" height="1.4" fill="#88a8c2" />
<rect x="926" y="229.8" width="57" height="1.4" fill="#88a8c2" />
<rect x="926" y="242.4" width="57" height="1.4" fill="#88a8c2" />
<rect x="926" y="254.9" width="57" height="1.4" fill="#88a8c2" />
<rect x="926" y="267.5" width="57" height="1.4" fill="#88a8c2" />
<rect x="926" y="280.1" width="57" height="1.4" fill="#88a8c2" />
<rect x="926" y="292.7" width="57" height="1.4" fill="#88a8c2" />
<rect x="926" y="305.3" width="57" height="1.4" fill="#88a8c2" />
<rect x="926" y="317.9" width="57" height="1.4" fill="#88a8c2" />
<rect x="926" y="330.5" width="57" height="1.4" fill="#88a8c2" />
<rect x="926" y="343.1" width="57" height="1.4" fill="#88a8c2" />
<rect x="926" y="355.7" width="57" height="1.4" fill="#88a8c2" />
<rect x="926" y="368.3" width="57" height="1.4" fill="#88a8c2" />
<rect x="926" y="380.9" width="57" height="1.4" fill="#88a8c2" />
<rect x="926" y="393.4" width="57" height="1.4" fill="#88a8c2" />
<rect x="926" y="406.0" width="57" height="1.4" fill="#88a8c2" />
<rect x="926" y="418.6" width="57" height="1.4" fill="#88a8c2" />
<rect x="917.5" y="183.0" width="4.5" height="6" fill="#d2d6de" />
<rect x="987" y="183.0" width="4.5" height="6" fill="#d2d6de" />
<rect x="917.5" y="195.5" width="4.5" height="6" fill="#d2d6de" />
<rect x="987" y="195.5" width="4.5" height="6" fill="#d2d6de" />
<rect x="917.5" y="208.1" width="4.5" height="6" fill="#d2d6de" />
<rect x="987" y="208.1" width="4.5" height="6" fill="#d2d6de" />
<rect x="917.5" y="220.6" width="4.5" height="6" fill="#d2d6de" />
<rect x="987" y="220.6" width="4.5" height="6" fill="#d2d6de" />
<rect x="917.5" y="233.1" width="4.5" height="6" fill="#d2d6de" />
<rect x="987" y="233.1" width="4.5" height="6" fill="#d2d6de" />
<rect x="917.5" y="245.7" width="4.5" height="6" fill="#d2d6de" />
<rect x="987" y="245.7" width="4.5" height="6" fill="#d2d6de" />
<rect x="917.5" y="258.2" width="4.5" height="6" fill="#d2d6de" />
<rect x="987" y="258.2" width="4.5" height="6" fill="#d2d6de" />
<rect x="917.5" y="270.7" width="4.5" height="6" fill="#d2d6de" />
<rect x="987" y="270.7" width="4.5" height="6" fill="#d2d6de" />
<rect x="917.5" y="283.2" width="4.5" height="6" fill="#d2d6de" />
<rect x="987" y="283.2" width="4.5" height="6" fill="#d2d6de" />
<rect x="917.5" y="295.8" width="4.5" height="6" fill="#d2d6de" />
<rect x="987" y="295.8" width="4.5" height="6" fill="#d2d6de" />
<rect x="917.5" y="308.3" width="4.5" height="6" fill="#d2d6de" />
<rect x="987" y="308.3" width="4.5" height="6" fill="#d2d6de" />
<rect x="917.5" y="320.8" width="4.5" height="6" fill="#d2d6de" />
<rect x="987" y="320.8" width="4.5" height="6" fill="#d2d6de" />
<rect x="917.5" y="333.4" width="4.5" height="6" fill="#d2d6de" />
<rect x="987" y="333.4" width="4.5" height="6" fill="#d2d6de" />
<rect x="917.5" y="345.9" width="4.5" height="6" fill="#d2d6de" />
<rect x="987" y="345.9" width="4.5" height="6" fill="#d2d6de" />
<rect x="917.5" y="358.4" width="4.5" height="6" fill="#d2d6de" />
<rect x="987" y="358.4" width="4.5" height="6" fill="#d2d6de" />
<rect x="917.5" y="370.9" width="4.5" height="6" fill="#d2d6de" />
<rect x="987" y="370.9" width="4.5" height="6" fill="#d2d6de" />
<rect x="917.5" y="383.5" width="4.5" height="6" fill="#d2d6de" />
<rect x="987" y="383.5" width="4.5" height="6" fill="#d2d6de" />
<rect x="917.5" y="396.0" width="4.5" height="6" fill="#d2d6de" />
<rect x="987" y="396.0" width="4.5" height="6" fill="#d2d6de" />
<rect x="917.5" y="408.5" width="4.5" height="6" fill="#d2d6de" />
<rect x="987" y="408.5" width="4.5" height="6" fill="#d2d6de" />
<rect x="917.5" y="421.1" width="4.5" height="6" fill="#d2d6de" />
<rect x="987" y="421.1" width="4.5" height="6" fill="#d2d6de" />
<path d="M911 457 L931 455 L961 451 L998 451 L998 457 Z" fill="#536273"/>
<rect x="999" y="146" width="87" height="311" fill="#627485" />
<rect x="997.8" y="146" width="1.5" height="311" fill="#2a2a2c" />
<rect x="1013" y="146" width="60" height="22" fill="#4b596b" />
<rect x="1014" y="146" width="58" height="20.5" fill="#617386" />
<rect x="1020" y="150" width="13" height="13" fill="#c2c7d2" />
<rect x="1036" y="150" width="13" height="13" fill="#c2c7d2" />
<rect x="1052" y="150" width="13" height="13" fill="#c2c7d2" />
<rect x="1000" y="175" width="6" height="1.2" fill="#4b596b" />
<rect x="1006" y="177" width="5" height="1.2" fill="#4b596b" />
<rect x="1011" y="177" width="3" height="255" fill="#4d5b6d" />
<rect x="1071" y="177" width="3" height="255" fill="#4d5b6d" />
<rect x="1074" y="177" width="5" height="1.2" fill="#4b596b" />
<rect x="1079" y="175" width="6" height="1.2" fill="#4b596b" />
<rect x="1000" y="434" width="6" height="1.2" fill="#4b596b" />
<rect x="1006" y="432" width="5" height="1.2" fill="#4b596b" />
<rect x="1074" y="432" width="5" height="1.2" fill="#4b596b" />
<rect x="1079" y="434" width="6" height="1.2" fill="#4b596b" />
<rect x="1014" y="180" width="57" height="250" fill="#a0bdd6" />
<rect x="1014" y="192.0" width="57" height="1.4" fill="#88a8c2" />
<rect x="1014" y="204.6" width="57" height="1.4" fill="#88a8c2" />
<rect x="1014" y="217.2" width="57" height="1.4" fill="#88a8c2" />
<rect x="1014" y="229.8" width="57" height="1.4" fill="#88a8c2" />
<rect x="1014" y="242.4" width="57" height="1.4" fill="#88a8c2" />
<rect x="1014" y="254.9" width="57" height="1.4" fill="#88a8c2" />
<rect x="1014" y="267.5" width="57" height="1.4" fill="#88a8c2" />
<rect x="1014" y="280.1" width="57" height="1.4" fill="#88a8c2" />
<rect x="1014" y="292.7" width="57" height="1.4" fill="#88a8c2" />
<rect x="1014" y="305.3" width="57" height="1.4" fill="#88a8c2" />
<rect x="1014" y="317.9" width="57" height="1.4" fill="#88a8c2" />
<rect x="1014" y="330.5" width="57" height="1.4" fill="#88a8c2" />
<rect x="1014" y="343.1" width="57" height="1.4" fill="#88a8c2" />
<rect x="1014" y="355.7" width="57" height="1.4" fill="#88a8c2" />
<rect x="1014" y="368.3" width="57" height="1.4" fill="#88a8c2" />
<rect x="1014" y="380.9" width="57" height="1.4" fill="#88a8c2" />
<rect x="1014" y="393.4" width="57" height="1.4" fill="#88a8c2" />
<rect x="1014" y="406.0" width="57" height="1.4" fill="#88a8c2" />
<rect x="1014" y="418.6" width="57" height="1.4" fill="#88a8c2" />
<rect x="1005.5" y="183.0" width="4.5" height="6" fill="#d2d6de" />
<rect x="1075" y="183.0" width="4.5" height="6" fill="#d2d6de" />
<rect x="1005.5" y="195.5" width="4.5" height="6" fill="#d2d6de" />
<rect x="1075" y="195.5" width="4.5" height="6" fill="#d2d6de" />
<rect x="1005.5" y="208.1" width="4.5" height="6" fill="#d2d6de" />
<rect x="1075" y="208.1" width="4.5" height="6" fill="#d2d6de" />
<rect x="1005.5" y="220.6" width="4.5" height="6" fill="#d2d6de" />
<rect x="1075" y="220.6" width="4.5" height="6" fill="#d2d6de" />
<rect x="1005.5" y="233.1" width="4.5" height="6" fill="#d2d6de" />
<rect x="1075" y="233.1" width="4.5" height="6" fill="#d2d6de" />
<rect x="1005.5" y="245.7" width="4.5" height="6" fill="#d2d6de" />
<rect x="1075" y="245.7" width="4.5" height="6" fill="#d2d6de" />
<rect x="1005.5" y="258.2" width="4.5" height="6" fill="#d2d6de" />
<rect x="1075" y="258.2" width="4.5" height="6" fill="#d2d6de" />
<rect x="1005.5" y="270.7" width="4.5" height="6" fill="#d2d6de" />
<rect x="1075" y="270.7" width="4.5" height="6" fill="#d2d6de" />
<rect x="1005.5" y="283.2" width="4.5" height="6" fill="#d2d6de" />
<rect x="1075" y="283.2" width="4.5" height="6" fill="#d2d6de" />
<rect x="1005.5" y="295.8" width="4.5" height="6" fill="#d2d6de" />
<rect x="1075" y="295.8" width="4.5" height="6" fill="#d2d6de" />
<rect x="1005.5" y="308.3" width="4.5" height="6" fill="#d2d6de" />
<rect x="1075" y="308.3" width="4.5" height="6" fill="#d2d6de" />
<rect x="1005.5" y="320.8" width="4.5" height="6" fill="#d2d6de" />
<rect x="1075" y="320.8" width="4.5" height="6" fill="#d2d6de" />
<rect x="1005.5" y="333.4" width="4.5" height="6" fill="#d2d6de" />
<rect x="1075" y="333.4" width="4.5" height="6" fill="#d2d6de" />
<rect x="1005.5" y="345.9" width="4.5" height="6" fill="#d2d6de" />
<rect x="1075" y="345.9" width="4.5" height="6" fill="#d2d6de" />
<rect x="1005.5" y="358.4" width="4.5" height="6" fill="#d2d6de" />
<rect x="1075" y="358.4" width="4.5" height="6" fill="#d2d6de" />
<rect x="1005.5" y="370.9" width="4.5" height="6" fill="#d2d6de" />
<rect x="1075" y="370.9" width="4.5" height="6" fill="#d2d6de" />
<rect x="1005.5" y="383.5" width="4.5" height="6" fill="#d2d6de" />
<rect x="1075" y="383.5" width="4.5" height="6" fill="#d2d6de" />
<rect x="1005.5" y="396.0" width="4.5" height="6" fill="#d2d6de" />
<rect x="1075" y="396.0" width="4.5" height="6" fill="#d2d6de" />
<rect x="1005.5" y="408.5" width="4.5" height="6" fill="#d2d6de" />
<rect x="1075" y="408.5" width="4.5" height="6" fill="#d2d6de" />
<rect x="1005.5" y="421.1" width="4.5" height="6" fill="#d2d6de" />
<rect x="1075" y="421.1" width="4.5" height="6" fill="#d2d6de" />
<path d="M999 457 L1019 455 L1049 451 L1086 451 L1086 457 Z" fill="#536273"/>
<rect x="1087" y="146" width="86" height="311" fill="#627485" />
<rect x="1085.8" y="146" width="1.5" height="311" fill="#2a2a2c" />
<rect x="1101" y="146" width="60" height="22" fill="#4b596b" />
<rect x="1102" y="146" width="58" height="20.5" fill="#617386" />
<rect x="1108" y="150" width="13" height="13" fill="#c2c7d2" />
<rect x="1124" y="150" width="13" height="13" fill="#c2c7d2" />
<rect x="1140" y="150" width="13" height="13" fill="#c2c7d2" />
<rect x="1088" y="175" width="6" height="1.2" fill="#4b596b" />
<rect x="1094" y="177" width="5" height="1.2" fill="#4b596b" />
<rect x="1099" y="177" width="3" height="255" fill="#4d5b6d" />
<rect x="1159" y="177" width="3" height="255" fill="#4d5b6d" />
<rect x="1162" y="177" width="5" height="1.2" fill="#4b596b" />
<rect x="1167" y="175" width="6" height="1.2" fill="#4b596b" />
<rect x="1088" y="434" width="6" height="1.2" fill="#4b596b" />
<rect x="1094" y="432" width="5" height="1.2" fill="#4b596b" />
<rect x="1162" y="432" width="5" height="1.2" fill="#4b596b" />
<rect x="1167" y="434" width="6" height="1.2" fill="#4b596b" />
<rect x="1102" y="180" width="57" height="250" fill="#a0bdd6" />
<rect x="1102" y="192.0" width="57" height="1.4" fill="#88a8c2" />
<rect x="1102" y="204.6" width="57" height="1.4" fill="#88a8c2" />
<rect x="1102" y="217.2" width="57" height="1.4" fill="#88a8c2" />
<rect x="1102" y="229.8" width="57" height="1.4" fill="#88a8c2" />
<rect x="1102" y="242.4" width="57" height="1.4" fill="#88a8c2" />
<rect x="1102" y="254.9" width="57" height="1.4" fill="#88a8c2" />
<rect x="1102" y="267.5" width="57" height="1.4" fill="#88a8c2" />
<rect x="1102" y="280.1" width="57" height="1.4" fill="#88a8c2" />
<rect x="1102" y="292.7" width="57" height="1.4" fill="#88a8c2" />
<rect x="1102" y="305.3" width="57" height="1.4" fill="#88a8c2" />
<rect x="1102" y="317.9" width="57" height="1.4" fill="#88a8c2" />
<rect x="1102" y="330.5" width="57" height="1.4" fill="#88a8c2" />
<rect x="1102" y="343.1" width="57" height="1.4" fill="#88a8c2" />
<rect x="1102" y="355.7" width="57" height="1.4" fill="#88a8c2" />
<rect x="1102" y="368.3" width="57" height="1.4" fill="#88a8c2" />
<rect x="1102" y="380.9" width="57" height="1.4" fill="#88a8c2" />
<rect x="1102" y="393.4" width="57" height="1.4" fill="#88a8c2" />
<rect x="1102" y="406.0" width="57" height="1.4" fill="#88a8c2" />
<rect x="1102" y="418.6" width="57" height="1.4" fill="#88a8c2" />
<rect x="1093.5" y="183.0" width="4.5" height="6" fill="#d2d6de" />
<rect x="1163" y="183.0" width="4.5" height="6" fill="#d2d6de" />
<rect x="1093.5" y="195.5" width="4.5" height="6" fill="#d2d6de" />
<rect x="1163" y="195.5" width="4.5" height="6" fill="#d2d6de" />
<rect x="1093.5" y="208.1" width="4.5" height="6" fill="#d2d6de" />
<rect x="1163" y="208.1" width="4.5" height="6" fill="#d2d6de" />
<rect x="1093.5" y="220.6" width="4.5" height="6" fill="#d2d6de" />
<rect x="1163" y="220.6" width="4.5" height="6" fill="#d2d6de" />
<rect x="1093.5" y="233.1" width="4.5" height="6" fill="#d2d6de" />
<rect x="1163" y="233.1" width="4.5" height="6" fill="#d2d6de" />
<rect x="1093.5" y="245.7" width="4.5" height="6" fill="#d2d6de" />
<rect x="1163" y="245.7" width="4.5" height="6" fill="#d2d6de" />
<rect x="1093.5" y="258.2" width="4.5" height="6" fill="#d2d6de" />
<rect x="1163" y="258.2" width="4.5" height="6" fill="#d2d6de" />
<rect x="1093.5" y="270.7" width="4.5" height="6" fill="#d2d6de" />
<rect x="1163" y="270.7" width="4.5" height="6" fill="#d2d6de" />
<rect x="1093.5" y="283.2" width="4.5" height="6" fill="#d2d6de" />
<rect x="1163" y="283.2" width="4.5" height="6" fill="#d2d6de" />
<rect x="1093.5" y="295.8" width="4.5" height="6" fill="#d2d6de" />
<rect x="1163" y="295.8" width="4.5" height="6" fill="#d2d6de" />
<rect x="1093.5" y="308.3" width="4.5" height="6" fill="#d2d6de" />
<rect x="1163" y="308.3" width="4.5" height="6" fill="#d2d6de" />
<rect x="1093.5" y="320.8" width="4.5" height="6" fill="#d2d6de" />
<rect x="1163" y="320.8" width="4.5" height="6" fill="#d2d6de" />
<rect x="1093.5" y="333.4" width="4.5" height="6" fill="#d2d6de" />
<rect x="1163" y="333.4" width="4.5" height="6" fill="#d2d6de" />
<rect x="1093.5" y="345.9" width="4.5" height="6" fill="#d2d6de" />
<rect x="1163" y="345.9" width="4.5" height="6" fill="#d2d6de" />
<rect x="1093.5" y="358.4" width="4.5" height="6" fill="#d2d6de" />
<rect x="1163" y="358.4" width="4.5" height="6" fill="#d2d6de" />
<rect x="1093.5" y="370.9" width="4.5" height="6" fill="#d2d6de" />
<rect x="1163" y="370.9" width="4.5" height="6" fill="#d2d6de" />
<rect x="1093.5" y="383.5" width="4.5" height="6" fill="#d2d6de" />
<rect x="1163" y="383.5" width="4.5" height="6" fill="#d2d6de" />
<rect x="1093.5" y="396.0" width="4.5" height="6" fill="#d2d6de" />
<rect x="1163" y="396.0" width="4.5" height="6" fill="#d2d6de" />
<rect x="1093.5" y="408.5" width="4.5" height="6" fill="#d2d6de" />
<rect x="1163" y="408.5" width="4.5" height="6" fill="#d2d6de" />
<rect x="1093.5" y="421.1" width="4.5" height="6" fill="#d2d6de" />
<rect x="1163" y="421.1" width="4.5" height="6" fill="#d2d6de" />
<path d="M1087 457 L1107 455 L1137 451 L1173 451 L1173 457 Z" fill="#536273"/>
<rect x="299" y="540" width="531" height="318" fill="#627485" />
<rect x="299" y="540" width="61" height="318" fill="#475366" />
<rect x="308" y="550" width="43" height="42" fill="#3a404c" />
<rect x="313.2" y="554.3" width="33.6" height="33.3" fill="#9aa3b3" />
<rect x="319" y="560" width="15" height="20.3" fill="#3c404b" />
<rect x="334" y="565.2" width="5" height="10" fill="#3c404b" />
<rect x="299" y="797" width="61" height="1.5" fill="#2a2a2c" />
<rect x="315.5" y="798" width="28.6" height="52.4" fill="none" stroke="#2a2a2c" stroke-width="1"/>
<circle cx="322.9" cy="808" r="4.3" fill="none" stroke="#3a4452" stroke-width="0.8"/>
<circle cx="322.9" cy="840.7" r="4.3" fill="none" stroke="#3a4452" stroke-width="0.8"/>
<circle cx="337.1" cy="808" r="4.3" fill="none" stroke="#3a4452" stroke-width="0.8"/>
<circle cx="337.1" cy="840.7" r="4.3" fill="none" stroke="#3a4452" stroke-width="0.8"/>
<rect x="360" y="540" width="1" height="318" fill="#56657a" />
<rect x="365" y="547" width="15" height="15" fill="#22b14c" />
<rect x="384" y="547" width="15" height="15" fill="#c2c7d2" />
<rect x="403" y="547" width="15" height="15" fill="#c2c7d2" />
<rect x="361" y="708" width="61" height="22" fill="#475366" />
<rect x="361" y="744" width="61" height="114" fill="#475366" />
<rect x="370" y="733" width="43" height="86" fill="#3a404c" />
<rect x="375.5" y="738.1" width="33.7" height="35.4" fill="#9aa3b3" />
<rect x="380" y="742.7" width="18.7" height="25.1" fill="#3c404b" />
<rect x="398.7" y="750.3" width="5.2" height="10.5" fill="#3c404b" />
<rect x="375.5" y="778.8" width="33.7" height="35.7" fill="#9aa3b3" />
<rect x="380" y="783.4" width="18.7" height="25.1" fill="#3c404b" />
<rect x="398.7" y="791" width="5.2" height="10.5" fill="#3c404b" />
<rect x="422" y="540" width="1.2" height="318" fill="#55647a" />
<rect x="361" y="566.3" width="439" height="2" fill="#7889a0" />
<rect x="431.3" y="547" width="50.2" height="13.5" fill="#138a8a" />
<text x="456.4" y="557.8" font-family="Liberation Sans" font-weight="bold" font-size="9.5" fill="#fff" text-anchor="middle" textLength="43" lengthAdjust="spacingAndGlyphs">SIEMENS</text>
<path d="M439.3 576.7 L476.3 576.7 L476.3 581.2 L472.3 585.7 L472.3 649.7 L476.3 653.7 L476.3 658.7 L439.3 658.7 L439.3 653.7 L443.3 649.7 L443.3 585.7 L439.3 581.2 Z" fill="#a0bdd6"/><rect x="440.3" y="581.2" width="35" height="1" fill="#88a8c2" /><rect x="443.3" y="586.4" width="29" height="1" fill="#88a8c2" /><rect x="443.3" y="591.5" width="29" height="1" fill="#88a8c2" /><rect x="443.3" y="596.6" width="29" height="1" fill="#88a8c2" /><rect x="443.3" y="601.8" width="29" height="1" fill="#88a8c2" /><rect x="443.3" y="606.9" width="29" height="1" fill="#88a8c2" /><rect x="443.3" y="612.1" width="29" height="1" fill="#88a8c2" /><rect x="443.3" y="617.2" width="29" height="1" fill="#88a8c2" /><rect x="443.3" y="622.4" width="29" height="1" fill="#88a8c2" /><rect x="443.3" y="627.5" width="29" height="1" fill="#88a8c2" /><rect x="443.3" y="632.7" width="29" height="1" fill="#88a8c2" /><rect x="443.3" y="637.8" width="29" height="1" fill="#88a8c2" /><rect x="443.3" y="643.0" width="29" height="1" fill="#88a8c2" /><rect x="443.3" y="648.1" width="29" height="1" fill="#88a8c2" /><rect x="440.3" y="653.3" width="35" height="1" fill="#88a8c2" />
<text x="456.9" y="672.3" font-family="Liberation Sans" font-size="10.8" fill="#d5d9e0" text-anchor="middle" textLength="39" lengthAdjust="spacingAndGlyphs">SIMATIC</text>
<text x="457.2" y="686.2" font-family="Liberation Sans" font-size="10.8" fill="#d5d9e0" text-anchor="middle" textLength="46" lengthAdjust="spacingAndGlyphs">ET 200SP</text>
<rect x="423" y="709" width="377" height="2" fill="#3f4a59" />
<rect x="554" y="719" width="11" height="22" fill="#111" />
<rect x="556.5" y="721" width="6" height="17" fill="#5a6777" />
<rect x="556.5" y="718" width="6" height="4" fill="#8894a3" />
<rect x="552" y="779" width="32" height="43" fill="#526072" />
<rect x="562.7" y="767" width="5" height="67" fill="#a5dcea" />
<rect x="610.5" y="540" width="1.2" height="318" fill="#2a2a2c" />
<rect x="611.5" y="547.6" width="13" height="13.2" fill="#c2c7d2" />
<rect x="627.5" y="547.6" width="13" height="13.2" fill="#c2c7d2" />
<rect x="643.5" y="547.6" width="13" height="13.2" fill="#c2c7d2" />
<path d="M617.2 576.4 L654.2 576.4 L654.2 580.9 L650.2 585.4 L650.2 649.4 L654.2 653.4 L654.2 658.4 L617.2 658.4 L617.2 653.4 L621.2 649.4 L621.2 585.4 L617.2 580.9 Z" fill="#a0bdd6"/><rect x="618.2" y="580.9" width="35" height="1" fill="#88a8c2" /><rect x="621.2" y="586.0" width="29" height="1" fill="#88a8c2" /><rect x="621.2" y="591.2" width="29" height="1" fill="#88a8c2" /><rect x="621.2" y="596.3" width="29" height="1" fill="#88a8c2" /><rect x="621.2" y="601.5" width="29" height="1" fill="#88a8c2" /><rect x="621.2" y="606.6" width="29" height="1" fill="#88a8c2" /><rect x="621.2" y="611.8" width="29" height="1" fill="#88a8c2" /><rect x="621.2" y="616.9" width="29" height="1" fill="#88a8c2" /><rect x="621.2" y="622.1" width="29" height="1" fill="#88a8c2" /><rect x="621.2" y="627.2" width="29" height="1" fill="#88a8c2" /><rect x="621.2" y="632.4" width="29" height="1" fill="#88a8c2" /><rect x="621.2" y="637.5" width="29" height="1" fill="#88a8c2" /><rect x="621.2" y="642.7" width="29" height="1" fill="#88a8c2" /><rect x="621.2" y="647.8" width="29" height="1" fill="#88a8c2" /><rect x="618.2" y="653.0" width="35" height="1" fill="#88a8c2" />
<rect x="614" y="660.8" width="3.8" height="3.5" fill="#d2d6de" />
<rect x="614" y="666.0" width="3.8" height="3.5" fill="#d2d6de" />
<rect x="614" y="671.2" width="3.8" height="3.5" fill="#d2d6de" />
<rect x="614" y="676.4" width="3.8" height="3.5" fill="#d2d6de" />
<rect x="614" y="681.6" width="3.8" height="3.5" fill="#d2d6de" />
<rect x="614" y="686.8" width="3.8" height="3.5" fill="#d2d6de" />
<rect x="614" y="692.0" width="3.8" height="3.5" fill="#d2d6de" />
<rect x="614" y="697.2" width="3.8" height="3.5" fill="#d2d6de" />
<rect x="614" y="702.4" width="3.8" height="3.5" fill="#d2d6de" />
<rect x="629" y="660.8" width="3.8" height="3.5" fill="#d2d6de" />
<rect x="629" y="666.0" width="3.8" height="3.5" fill="#d2d6de" />
<rect x="629" y="671.2" width="3.8" height="3.5" fill="#d2d6de" />
<rect x="629" y="676.4" width="3.8" height="3.5" fill="#d2d6de" />
<rect x="629" y="681.6" width="3.8" height="3.5" fill="#d2d6de" />
<rect x="629" y="686.8" width="3.8" height="3.5" fill="#d2d6de" />
<rect x="629" y="692.0" width="3.8" height="3.5" fill="#d2d6de" />
<rect x="629" y="697.2" width="3.8" height="3.5" fill="#d2d6de" />
<rect x="611.5" y="711" width="46.5" height="147" fill="#929db0" />
<circle cx="624.4" cy="721.2" r="4.9" fill="none" stroke="#6f7b8d" stroke-width="0.9"/>
<circle cx="644" cy="721.2" r="4.9" fill="none" stroke="#6f7b8d" stroke-width="0.9"/>
<circle cx="624.4" cy="736.8" r="4.9" fill="none" stroke="#6f7b8d" stroke-width="0.9"/>
<circle cx="644" cy="736.8" r="4.9" fill="none" stroke="#6f7b8d" stroke-width="0.9"/>
<circle cx="624.4" cy="752.3" r="4.9" fill="none" stroke="#6f7b8d" stroke-width="0.9"/>
<circle cx="644" cy="752.3" r="4.9" fill="none" stroke="#6f7b8d" stroke-width="0.9"/>
<circle cx="624.4" cy="767.9" r="4.9" fill="none" stroke="#6f7b8d" stroke-width="0.9"/>
<circle cx="644" cy="767.9" r="4.9" fill="none" stroke="#6f7b8d" stroke-width="0.9"/>
<circle cx="624.4" cy="783.4" r="4.9" fill="none" stroke="#6f7b8d" stroke-width="0.9"/>
<circle cx="644" cy="783.4" r="4.9" fill="none" stroke="#6f7b8d" stroke-width="0.9"/>
<circle cx="624.4" cy="799.0" r="4.9" fill="none" stroke="#6f7b8d" stroke-width="0.9"/>
<circle cx="644" cy="799.0" r="4.9" fill="none" stroke="#6f7b8d" stroke-width="0.9"/>
<circle cx="624.4" cy="814.6" r="4.9" fill="none" stroke="#6f7b8d" stroke-width="0.9"/>
<circle cx="644" cy="814.6" r="4.9" fill="none" stroke="#6f7b8d" stroke-width="0.9"/>
<circle cx="624.4" cy="830.1" r="4.9" fill="none" stroke="#6f7b8d" stroke-width="0.9"/>
<circle cx="644" cy="830.1" r="4.9" fill="none" stroke="#6f7b8d" stroke-width="0.9"/>
<circle cx="624.4" cy="845.7" r="4.9" fill="none" stroke="#6f7b8d" stroke-width="0.9"/>
<circle cx="644" cy="845.7" r="4.9" fill="none" stroke="#6f7b8d" stroke-width="0.9"/>
<rect x="658.0" y="540" width="1.2" height="318" fill="#2a2a2c" />
<rect x="659.0" y="547.6" width="13" height="13.2" fill="#c2c7d2" />
<rect x="675.0" y="547.6" width="13" height="13.2" fill="#c2c7d2" />
<rect x="691.0" y="547.6" width="13" height="13.2" fill="#c2c7d2" />
<path d="M664.7 576.4 L701.7 576.4 L701.7 580.9 L697.7 585.4 L697.7 649.4 L701.7 653.4 L701.7 658.4 L664.7 658.4 L664.7 653.4 L668.7 649.4 L668.7 585.4 L664.7 580.9 Z" fill="#a0bdd6"/><rect x="665.7" y="580.9" width="35" height="1" fill="#88a8c2" /><rect x="668.7" y="586.0" width="29" height="1" fill="#88a8c2" /><rect x="668.7" y="591.2" width="29" height="1" fill="#88a8c2" /><rect x="668.7" y="596.3" width="29" height="1" fill="#88a8c2" /><rect x="668.7" y="601.5" width="29" height="1" fill="#88a8c2" /><rect x="668.7" y="606.6" width="29" height="1" fill="#88a8c2" /><rect x="668.7" y="611.8" width="29" height="1" fill="#88a8c2" /><rect x="668.7" y="616.9" width="29" height="1" fill="#88a8c2" /><rect x="668.7" y="622.1" width="29" height="1" fill="#88a8c2" /><rect x="668.7" y="627.2" width="29" height="1" fill="#88a8c2" /><rect x="668.7" y="632.4" width="29" height="1" fill="#88a8c2" /><rect x="668.7" y="637.5" width="29" height="1" fill="#88a8c2" /><rect x="668.7" y="642.7" width="29" height="1" fill="#88a8c2" /><rect x="668.7" y="647.8" width="29" height="1" fill="#88a8c2" /><rect x="665.7" y="653.0" width="35" height="1" fill="#88a8c2" />
<rect x="661.5" y="660.8" width="3.8" height="3.5" fill="#d2d6de" />
<rect x="661.5" y="666.0" width="3.8" height="3.5" fill="#d2d6de" />
<rect x="661.5" y="671.2" width="3.8" height="3.5" fill="#d2d6de" />
<rect x="661.5" y="676.4" width="3.8" height="3.5" fill="#d2d6de" />
<rect x="661.5" y="681.6" width="3.8" height="3.5" fill="#d2d6de" />
<rect x="661.5" y="686.8" width="3.8" height="3.5" fill="#d2d6de" />
<rect x="661.5" y="692.0" width="3.8" height="3.5" fill="#d2d6de" />
<rect x="661.5" y="697.2" width="3.8" height="3.5" fill="#d2d6de" />
<rect x="661.5" y="702.4" width="3.8" height="3.5" fill="#d2d6de" />
<rect x="676.5" y="660.8" width="3.8" height="3.5" fill="#d2d6de" />
<rect x="676.5" y="666.0" width="3.8" height="3.5" fill="#d2d6de" />
<rect x="676.5" y="671.2" width="3.8" height="3.5" fill="#d2d6de" />
<rect x="676.5" y="676.4" width="3.8" height="3.5" fill="#d2d6de" />
<rect x="676.5" y="681.6" width="3.8" height="3.5" fill="#d2d6de" />
<rect x="676.5" y="686.8" width="3.8" height="3.5" fill="#d2d6de" />
<rect x="676.5" y="692.0" width="3.8" height="3.5" fill="#d2d6de" />
<rect x="676.5" y="697.2" width="3.8" height="3.5" fill="#d2d6de" />
<rect x="659.0" y="711" width="46.5" height="147" fill="#929db0" />
<circle cx="671.9" cy="721.2" r="4.9" fill="none" stroke="#6f7b8d" stroke-width="0.9"/>
<circle cx="691.5" cy="721.2" r="4.9" fill="none" stroke="#6f7b8d" stroke-width="0.9"/>
<circle cx="671.9" cy="736.8" r="4.9" fill="none" stroke="#6f7b8d" stroke-width="0.9"/>
<circle cx="691.5" cy="736.8" r="4.9" fill="none" stroke="#6f7b8d" stroke-width="0.9"/>
<circle cx="671.9" cy="752.3" r="4.9" fill="none" stroke="#6f7b8d" stroke-width="0.9"/>
<circle cx="691.5" cy="752.3" r="4.9" fill="none" stroke="#6f7b8d" stroke-width="0.9"/>
<circle cx="671.9" cy="767.9" r="4.9" fill="none" stroke="#6f7b8d" stroke-width="0.9"/>
<circle cx="691.5" cy="767.9" r="4.9" fill="none" stroke="#6f7b8d" stroke-width="0.9"/>
<circle cx="671.9" cy="783.4" r="4.9" fill="none" stroke="#6f7b8d" stroke-width="0.9"/>
<circle cx="691.5" cy="783.4" r="4.9" fill="none" stroke="#6f7b8d" stroke-width="0.9"/>
<circle cx="671.9" cy="799.0" r="4.9" fill="none" stroke="#6f7b8d" stroke-width="0.9"/>
<circle cx="691.5" cy="799.0" r="4.9" fill="none" stroke="#6f7b8d" stroke-width="0.9"/>
<circle cx="671.9" cy="814.6" r="4.9" fill="none" stroke="#6f7b8d" stroke-width="0.9"/>
<circle cx="691.5" cy="814.6" r="4.9" fill="none" stroke="#6f7b8d" stroke-width="0.9"/>
<circle cx="671.9" cy="830.1" r="4.9" fill="none" stroke="#6f7b8d" stroke-width="0.9"/>
<circle cx="691.5" cy="830.1" r="4.9" fill="none" stroke="#6f7b8d" stroke-width="0.9"/>
<circle cx="671.9" cy="845.7" r="4.9" fill="none" stroke="#6f7b8d" stroke-width="0.9"/>
<circle cx="691.5" cy="845.7" r="4.9" fill="none" stroke="#6f7b8d" stroke-width="0.9"/>
<rect x="705.5" y="540" width="1.2" height="318" fill="#2a2a2c" />
<rect x="706.5" y="547.6" width="13" height="13.2" fill="#c2c7d2" />
<rect x="722.5" y="547.6" width="13" height="13.2" fill="#c2c7d2" />
<rect x="738.5" y="547.6" width="13" height="13.2" fill="#c2c7d2" />
<path d="M712.2 576.4 L749.2 576.4 L749.2 580.9 L745.2 585.4 L745.2 649.4 L749.2 653.4 L749.2 658.4 L712.2 658.4 L712.2 653.4 L716.2 649.4 L716.2 585.4 L712.2 580.9 Z" fill="#a0bdd6"/><rect x="713.2" y="580.9" width="35" height="1" fill="#88a8c2" /><rect x="716.2" y="586.0" width="29" height="1" fill="#88a8c2" /><rect x="716.2" y="591.2" width="29" height="1" fill="#88a8c2" /><rect x="716.2" y="596.3" width="29" height="1" fill="#88a8c2" /><rect x="716.2" y="601.5" width="29" height="1" fill="#88a8c2" /><rect x="716.2" y="606.6" width="29" height="1" fill="#88a8c2" /><rect x="716.2" y="611.8" width="29" height="1" fill="#88a8c2" /><rect x="716.2" y="616.9" width="29" height="1" fill="#88a8c2" /><rect x="716.2" y="622.1" width="29" height="1" fill="#88a8c2" /><rect x="716.2" y="627.2" width="29" height="1" fill="#88a8c2" /><rect x="716.2" y="632.4" width="29" height="1" fill="#88a8c2" /><rect x="716.2" y="637.5" width="29" height="1" fill="#88a8c2" /><rect x="716.2" y="642.7" width="29" height="1" fill="#88a8c2" /><rect x="716.2" y="647.8" width="29" height="1" fill="#88a8c2" /><rect x="713.2" y="653.0" width="35" height="1" fill="#88a8c2" />
<rect x="709" y="660.8" width="3.8" height="3.5" fill="#d2d6de" />
<rect x="709" y="666.0" width="3.8" height="3.5" fill="#d2d6de" />
<rect x="709" y="671.2" width="3.8" height="3.5" fill="#d2d6de" />
<rect x="709" y="676.4" width="3.8" height="3.5" fill="#d2d6de" />
<rect x="709" y="681.6" width="3.8" height="3.5" fill="#d2d6de" />
<rect x="709" y="686.8" width="3.8" height="3.5" fill="#d2d6de" />
<rect x="709" y="692.0" width="3.8" height="3.5" fill="#d2d6de" />
<rect x="709" y="697.2" width="3.8" height="3.5" fill="#d2d6de" />
<rect x="709" y="702.4" width="3.8" height="3.5" fill="#d2d6de" />
<rect x="724" y="660.8" width="3.8" height="3.5" fill="#d2d6de" />
<rect x="724" y="666.0" width="3.8" height="3.5" fill="#d2d6de" />
<rect x="724" y="671.2" width="3.8" height="3.5" fill="#d2d6de" />
<rect x="724" y="676.4" width="3.8" height="3.5" fill="#d2d6de" />
<rect x="724" y="681.6" width="3.8" height="3.5" fill="#d2d6de" />
<rect x="724" y="686.8" width="3.8" height="3.5" fill="#d2d6de" />
<rect x="724" y="692.0" width="3.8" height="3.5" fill="#d2d6de" />
<rect x="724" y="697.2" width="3.8" height="3.5" fill="#d2d6de" />
<rect x="706.5" y="711" width="46.5" height="147" fill="#929db0" />
<circle cx="719.4" cy="721.2" r="4.9" fill="none" stroke="#6f7b8d" stroke-width="0.9"/>
<circle cx="739" cy="721.2" r="4.9" fill="none" stroke="#6f7b8d" stroke-width="0.9"/>
<circle cx="719.4" cy="736.8" r="4.9" fill="none" stroke="#6f7b8d" stroke-width="0.9"/>
<circle cx="739" cy="736.8" r="4.9" fill="none" stroke="#6f7b8d" stroke-width="0.9"/>
<circle cx="719.4" cy="752.3" r="4.9" fill="none" stroke="#6f7b8d" stroke-width="0.9"/>
<circle cx="739" cy="752.3" r="4.9" fill="none" stroke="#6f7b8d" stroke-width="0.9"/>
<circle cx="719.4" cy="767.9" r="4.9" fill="none" stroke="#6f7b8d" stroke-width="0.9"/>
<circle cx="739" cy="767.9" r="4.9" fill="none" stroke="#6f7b8d" stroke-width="0.9"/>
<circle cx="719.4" cy="783.4" r="4.9" fill="none" stroke="#6f7b8d" stroke-width="0.9"/>
<circle cx="739" cy="783.4" r="4.9" fill="none" stroke="#6f7b8d" stroke-width="0.9"/>
<circle cx="719.4" cy="799.0" r="4.9" fill="none" stroke="#6f7b8d" stroke-width="0.9"/>
<circle cx="739" cy="799.0" r="4.9" fill="none" stroke="#6f7b8d" stroke-width="0.9"/>
<circle cx="719.4" cy="814.6" r="4.9" fill="none" stroke="#6f7b8d" stroke-width="0.9"/>
<circle cx="739" cy="814.6" r="4.9" fill="none" stroke="#6f7b8d" stroke-width="0.9"/>
<circle cx="719.4" cy="830.1" r="4.9" fill="none" stroke="#6f7b8d" stroke-width="0.9"/>
<circle cx="739" cy="830.1" r="4.9" fill="none" stroke="#6f7b8d" stroke-width="0.9"/>
<circle cx="719.4" cy="845.7" r="4.9" fill="none" stroke="#6f7b8d" stroke-width="0.9"/>
<circle cx="739" cy="845.7" r="4.9" fill="none" stroke="#6f7b8d" stroke-width="0.9"/>
<rect x="753.0" y="540" width="1.2" height="318" fill="#2a2a2c" />
<rect x="754.0" y="547.6" width="13" height="13.2" fill="#c2c7d2" />
<rect x="770.0" y="547.6" width="13" height="13.2" fill="#c2c7d2" />
<rect x="786.0" y="547.6" width="13" height="13.2" fill="#c2c7d2" />
<path d="M759.7 576.4 L796.7 576.4 L796.7 580.9 L792.7 585.4 L792.7 649.4 L796.7 653.4 L796.7 658.4 L759.7 658.4 L759.7 653.4 L763.7 649.4 L763.7 585.4 L759.7 580.9 Z" fill="#a0bdd6"/><rect x="760.7" y="580.9" width="35" height="1" fill="#88a8c2" /><rect x="763.7" y="586.0" width="29" height="1" fill="#88a8c2" /><rect x="763.7" y="591.2" width="29" height="1" fill="#88a8c2" /><rect x="763.7" y="596.3" width="29" height="1" fill="#88a8c2" /><rect x="763.7" y="601.5" width="29" height="1" fill="#88a8c2" /><rect x="763.7" y="606.6" width="29" height="1" fill="#88a8c2" /><rect x="763.7" y="611.8" width="29" height="1" fill="#88a8c2" /><rect x="763.7" y="616.9" width="29" height="1" fill="#88a8c2" /><rect x="763.7" y="622.1" width="29" height="1" fill="#88a8c2" /><rect x="763.7" y="627.2" width="29" height="1" fill="#88a8c2" /><rect x="763.7" y="632.4" width="29" height="1" fill="#88a8c2" /><rect x="763.7" y="637.5" width="29" height="1" fill="#88a8c2" /><rect x="763.7" y="642.7" width="29" height="1" fill="#88a8c2" /><rect x="763.7" y="647.8" width="29" height="1" fill="#88a8c2" /><rect x="760.7" y="653.0" width="35" height="1" fill="#88a8c2" />
<rect x="756.5" y="660.8" width="3.8" height="3.5" fill="#d2d6de" />
<rect x="771.5" y="660.8" width="3.8" height="3.5" fill="#d2d6de" />
<rect x="756.5" y="666.0" width="3.8" height="3.5" fill="#d2d6de" />
<rect x="771.5" y="666.0" width="3.8" height="3.5" fill="#d2d6de" />
<rect x="756.5" y="702.4" width="3.8" height="3.5" fill="#d2d6de" />
<rect x="754.0" y="711" width="46.5" height="147" fill="#929db0" />
<circle cx="766.9" cy="721.2" r="4.9" fill="none" stroke="#6f7b8d" stroke-width="0.9"/>
<circle cx="786.5" cy="721.2" r="4.9" fill="none" stroke="#6f7b8d" stroke-width="0.9"/>
<circle cx="766.9" cy="736.8" r="4.9" fill="none" stroke="#6f7b8d" stroke-width="0.9"/>
<circle cx="786.5" cy="736.8" r="4.9" fill="none" stroke="#6f7b8d" stroke-width="0.9"/>
<circle cx="766.9" cy="752.3" r="4.9" fill="none" stroke="#6f7b8d" stroke-width="0.9"/>
<circle cx="786.5" cy="752.3" r="4.9" fill="none" stroke="#6f7b8d" stroke-width="0.9"/>
<circle cx="766.9" cy="767.9" r="4.9" fill="none" stroke="#6f7b8d" stroke-width="0.9"/>
<circle cx="786.5" cy="767.9" r="4.9" fill="none" stroke="#6f7b8d" stroke-width="0.9"/>
<circle cx="766.9" cy="783.4" r="4.9" fill="none" stroke="#6f7b8d" stroke-width="0.9"/>
<circle cx="786.5" cy="783.4" r="4.9" fill="none" stroke="#6f7b8d" stroke-width="0.9"/>
<circle cx="766.9" cy="799.0" r="4.9" fill="none" stroke="#6f7b8d" stroke-width="0.9"/>
<circle cx="786.5" cy="799.0" r="4.9" fill="none" stroke="#6f7b8d" stroke-width="0.9"/>
<circle cx="766.9" cy="814.6" r="4.9" fill="none" stroke="#6f7b8d" stroke-width="0.9"/>
<circle cx="786.5" cy="814.6" r="4.9" fill="none" stroke="#6f7b8d" stroke-width="0.9"/>
<circle cx="766.9" cy="830.1" r="4.9" fill="none" stroke="#6f7b8d" stroke-width="0.9"/>
<circle cx="786.5" cy="830.1" r="4.9" fill="none" stroke="#6f7b8d" stroke-width="0.9"/>
<circle cx="766.9" cy="845.7" r="4.9" fill="none" stroke="#6f7b8d" stroke-width="0.9"/>
<circle cx="786.5" cy="845.7" r="4.9" fill="none" stroke="#6f7b8d" stroke-width="0.9"/>
<rect x="801" y="540" width="29" height="169" fill="#526073" />
<rect x="800.5" y="709" width="29.5" height="2" fill="#3f4a59" />
<rect x="801.5" y="711" width="28.5" height="147" fill="#939eb0" />
<rect x="800.5" y="540" width="1" height="318" fill="#2a2a2c" />
<rect x="299" y="858" width="531" height="1.5" fill="#111" />
<rect x="1618.5" y="95.5" width="280" height="142" fill="none" stroke="#8a8a8a" stroke-width="1"/>
<rect x="1617.5" y="256.5" width="280" height="142" fill="none" stroke="#8a8a8a" stroke-width="1"/>
<rect x="1617.5" y="417.5" width="280" height="142" fill="none" stroke="#8a8a8a" stroke-width="1"/>
<rect x="1618.5" y="578.5" width="280" height="142" fill="none" stroke="#8a8a8a" stroke-width="1"/>
<rect x="1625.5" y="144.5" width="99" height="21" fill="none" stroke="#ffff00" stroke-width="1.2"/>
<rect x="1795.5" y="144.5" width="99" height="21" fill="none" stroke="#6e6e6e" stroke-width="1.2"/>
<rect x="1625.5" y="465.5" width="99" height="21" fill="none" stroke="#15878a" stroke-width="1.2"/>
<rect x="1795.5" y="465.5" width="99" height="21" fill="none" stroke="#6e6e6e" stroke-width="1.2"/>
<circle cx="1759.6" cy="183.3" r="29.7" fill="none" stroke="#7a7a7a" stroke-width="4"/>
<g transform="translate(1759.6 182.70000000000002) rotate(36)">
<rect x="-31" y="-7.7" width="62" height="15.4" fill="#8a8a8a" stroke="#2c2c2c" stroke-width="0.7"/>
<path d="M-31 -7.7 L-20 -5.3 L22 -5.3 L31 -7.7 M-31 7.7 L-20 5.3 L22 5.3 L31 7.7 M-20 -5.3 L-20 5.3 M22 -5.3 L22 5.3" fill="none" stroke="#3a3a3a" stroke-width="0.8"/>
<path d="M-20.4 0.5 L-10.6 -4.3 L-10.1 4.6 Z" fill="#ffffff"/>
<path d="M-31 0.1 L-22.6 0.1" stroke="#ffffff" stroke-width="1.3"/>
</g>
<circle cx="1759" cy="504.5" r="29.7" fill="none" stroke="#7a7a7a" stroke-width="4"/>
<g transform="translate(1759 503.9) rotate(36)">
<rect x="-31" y="-7.7" width="62" height="15.4" fill="#8a8a8a" stroke="#2c2c2c" stroke-width="0.7"/>
<path d="M-31 -7.7 L-20 -5.3 L22 -5.3 L31 -7.7 M-31 7.7 L-20 5.3 L22 5.3 L31 7.7 M-20 -5.3 L-20 5.3 M22 -5.3 L22 5.3" fill="none" stroke="#3a3a3a" stroke-width="0.8"/>
<path d="M-20.4 0.5 L-10.6 -4.3 L-10.1 4.6 Z" fill="#ffffff"/>
<path d="M-31 0.1 L-22.6 0.1" stroke="#ffffff" stroke-width="1.3"/>
</g>
<rect x="1675" y="301.8" width="165" height="36" fill="#636572" />
<rect x="1675" y="343" width="165" height="36" fill="#636572" />
<rect x="1670" y="632" width="178" height="55.5" fill="#339966" />
<rect x="331.3" y="931.3" width="13.4" height="13.4" fill="#a9e08f"/>
<rect x="332.5" y="932.5" width="11" height="4" fill="#e6eedf"/><rect x="332.5" y="936.5" width="11" height="7" fill="#8fd864"/><rect x="332.5" y="942.5" width="11" height="1" fill="#c8ecb6"/>
<rect x="336" y="932" width="4" height="6.6" rx="1.2" fill="#4ab514"/><rect x="336.9" y="933" width="2.2" height="5" fill="#fff"/>
<rect x="336" y="939.8" width="4" height="3.2" rx="1.2" fill="#4ab514"/><rect x="336.9" y="940.6" width="2.2" height="1.7" fill="#fff"/>
<text x="64.74" y="33.9" font-size="17" font-weight="normal" fill="#ffffff" textLength="67.20" lengthAdjust="spacingAndGlyphs">Control:</text>
<text x="218.98" y="34.3" font-size="17" font-weight="normal" fill="#ffffff" textLength="52.96" lengthAdjust="spacingAndGlyphs">SCADA</text>
<text x="1813.46" y="23.1" font-size="15.7" font-weight="normal" fill="#ffffff" textLength="28.80" lengthAdjust="spacingAndGlyphs">Sica</text>
<text x="1750.94" y="46.9" font-size="16.3" font-weight="normal" fill="#ffffff" textLength="155.20" lengthAdjust="spacingAndGlyphs">28/02/2020 14:22:43</text>
<text x="992.02" y="73.75" font-size="16.3" font-weight="normal" fill="#ffffff" textLength="178.20" lengthAdjust="spacingAndGlyphs">ESTADOS AUTÓMATAS</text>
<text x="426.89" y="19.7" font-size="9.2" font-weight="normal" fill="#ffffff" textLength="34.10" lengthAdjust="spacingAndGlyphs">PLC MT</text>
<text x="566.75" y="20.4" font-size="9.2" font-weight="normal" fill="#ffffff" textLength="32.10" lengthAdjust="spacingAndGlyphs">PLC BT</text>
<text x="57.83" y="116.1" font-size="16.9" font-weight="bold" fill="#ffffff" textLength="51.11" lengthAdjust="spacingAndGlyphs">HOME</text>
<text x="57.83" y="180.1" font-size="16.9" font-weight="bold" fill="#ffffff" textLength="114.51" lengthAdjust="spacingAndGlyphs">UNIFILAR MT</text>
<text x="57.83" y="245.0" font-size="16.9" font-weight="bold" fill="#ffffff" textLength="112.19" lengthAdjust="spacingAndGlyphs">UNIFILAR BT</text>
<text x="57.23" y="309.0" font-size="16.9" font-weight="bold" fill="#ffffff" textLength="81.79" lengthAdjust="spacingAndGlyphs">MEDIDAS</text>
<text x="58.07" y="374.0" font-size="16.9" font-weight="bold" fill="#ffffff" textLength="82.95" lengthAdjust="spacingAndGlyphs">ALARMAS</text>
<text x="57.67" y="439.0" font-size="16.9" font-weight="bold" fill="#ffffff" textLength="77.95" lengthAdjust="spacingAndGlyphs">EVENTOS</text>
<text x="58.07" y="503.0" font-size="16.9" font-weight="bold" fill="#ffffff" textLength="54.55" lengthAdjust="spacingAndGlyphs">AUDIT</text>
<text x="57.07" y="568.0" font-size="16.9" font-weight="bold" fill="#ffffff" textLength="149.87" lengthAdjust="spacingAndGlyphs">MANTENIMIENTO</text>
<text x="58.07" y="633.0" font-size="16.9" font-weight="bold" fill="#ffffff" textLength="150.03" lengthAdjust="spacingAndGlyphs">CONFIGURACIÓN</text>
<text x="40.84" y="751.1" font-size="16.6" font-weight="bold" fill="#ffffff" textLength="133.23" lengthAdjust="spacingAndGlyphs">INICIO SESIÓN</text>
<text x="42.00" y="806.7" font-size="16.6" font-weight="bold" fill="#ffffff" textLength="140.59" lengthAdjust="spacingAndGlyphs">CERRAR SESIÓN</text>
<text x="42.00" y="863.0" font-size="16.6" font-weight="bold" fill="#ffffff" textLength="158.07" lengthAdjust="spacingAndGlyphs">CAMBIO USUARIO</text>
<text x="300.94" y="116.9" font-size="15" font-weight="normal" fill="#ffffff" textLength="212.64" lengthAdjust="spacingAndGlyphs">PLC Principal (Baja tensión)</text><rect x="302.4" y="118.1" width="210.4" height="1.2" fill="#ffffff"/>
<text x="301.02" y="517.75" font-size="15" font-weight="normal" fill="#ffffff" textLength="139.64" lengthAdjust="spacingAndGlyphs">PLC Media tensión</text><rect x="302.7" y="519.1" width="136.9" height="1.2" fill="#ffffff"/>
<text x="1625.46" y="116.9" font-size="15" font-weight="normal" fill="#ffffff" stroke="#ffffff" stroke-width="0.55" textLength="140.52" lengthAdjust="spacingAndGlyphs">Selector Modo PLC</text><rect x="1625.6" y="118.1" width="139.7" height="1.2" fill="#ffffff"/>
<text x="1621.50" y="278.0" font-size="15" font-weight="normal" fill="#ffffff" stroke="#ffffff" stroke-width="0.55" textLength="222.72" lengthAdjust="spacingAndGlyphs">Maniobras automáticas trafos</text><rect x="1622.5" y="279.3" width="221.7" height="1.2" fill="#ffffff"/>
<text x="1621.42" y="439.3" font-size="15" font-weight="normal" fill="#ffffff" stroke="#ffffff" stroke-width="0.55" textLength="121.48" lengthAdjust="spacingAndGlyphs">Selector salidas</text><rect x="1622.2" y="440.6" width="120.3" height="1.2" fill="#ffffff"/>
<text x="1622.50" y="600.5" font-size="15" font-weight="normal" fill="#ffffff" stroke="#ffffff" stroke-width="0.55" textLength="162.48" lengthAdjust="spacingAndGlyphs">Permiso de operación</text><rect x="1623.5" y="601.8" width="160.8" height="1.2" fill="#ffffff"/>
<text x="1638.10" y="161.0" font-size="15" font-weight="normal" fill="#ffffff" textLength="72.70" lengthAdjust="spacingAndGlyphs">Automático</text>
<text x="1820.26" y="161.0" font-size="15" font-weight="normal" fill="#ffffff" textLength="48.16" lengthAdjust="spacingAndGlyphs">Manual</text>
<text x="1642.18" y="482.5" font-size="15" font-weight="normal" fill="#ffffff" textLength="62.72" lengthAdjust="spacingAndGlyphs">Habilitado</text>
<text x="1801.18" y="482.5" font-size="15" font-weight="normal" fill="#ffffff" textLength="85.80" lengthAdjust="spacingAndGlyphs">Deshabilitado</text>
<text x="1725.82" y="325.5" font-size="13" font-weight="normal" fill="#f0f0e8" stroke="#f0f0e8" stroke-width="0.35" textLength="62.96" lengthAdjust="spacingAndGlyphs">HABILITAR</text>
<text x="1714.74" y="366.9" font-size="13" font-weight="normal" fill="#f0f0e8" stroke="#f0f0e8" stroke-width="0.35" textLength="85.36" lengthAdjust="spacingAndGlyphs">DESHABILITAR</text>
<text x="1730.06" y="664.4" font-size="13" font-weight="normal" fill="#ffffff" textLength="54.80" lengthAdjust="spacingAndGlyphs">PERMISO</text>
<text x="310.02" y="922.6" font-size="15" font-weight="normal" fill="#ffffff" textLength="45.80" lengthAdjust="spacingAndGlyphs">Estado</text>
<text x="517.86" y="922.6" font-size="15" font-weight="normal" fill="#ffffff" textLength="40.96" lengthAdjust="spacingAndGlyphs">Fecha</text>
<text x="764.18" y="922.6" font-size="15" font-weight="normal" fill="#ffffff" textLength="32.24" lengthAdjust="spacingAndGlyphs">Hora</text>
<text x="1258.78" y="923.0" font-size="15" font-weight="normal" fill="#ffffff" textLength="74.44" lengthAdjust="spacingAndGlyphs">Descripción</text>
<text x="1795.10" y="923.0" font-size="15" font-weight="normal" fill="#ffffff" textLength="41.12" lengthAdjust="spacingAndGlyphs">Grupo</text>
<text x="513.90" y="943.5" font-size="13" font-weight="normal" fill="#ffffff" textLength="53.04" lengthAdjust="spacingAndGlyphs">28/02/20</text>
<text x="726.38" y="943.5" font-size="13" font-weight="normal" fill="#ffffff" textLength="77.16" lengthAdjust="spacingAndGlyphs">14:13:37.381</text>
<text x="880.06" y="943.5" font-size="13" font-weight="normal" fill="#ffffff" textLength="250.88" lengthAdjust="spacingAndGlyphs">Alarma de apertura del interruptor de RED1</text>
<text x="1655.74" y="943.5" font-size="13" font-weight="normal" fill="#ffffff" textLength="130.04" lengthAdjust="spacingAndGlyphs">Maniobra conmutación</text>
</svg>
</body></html>
